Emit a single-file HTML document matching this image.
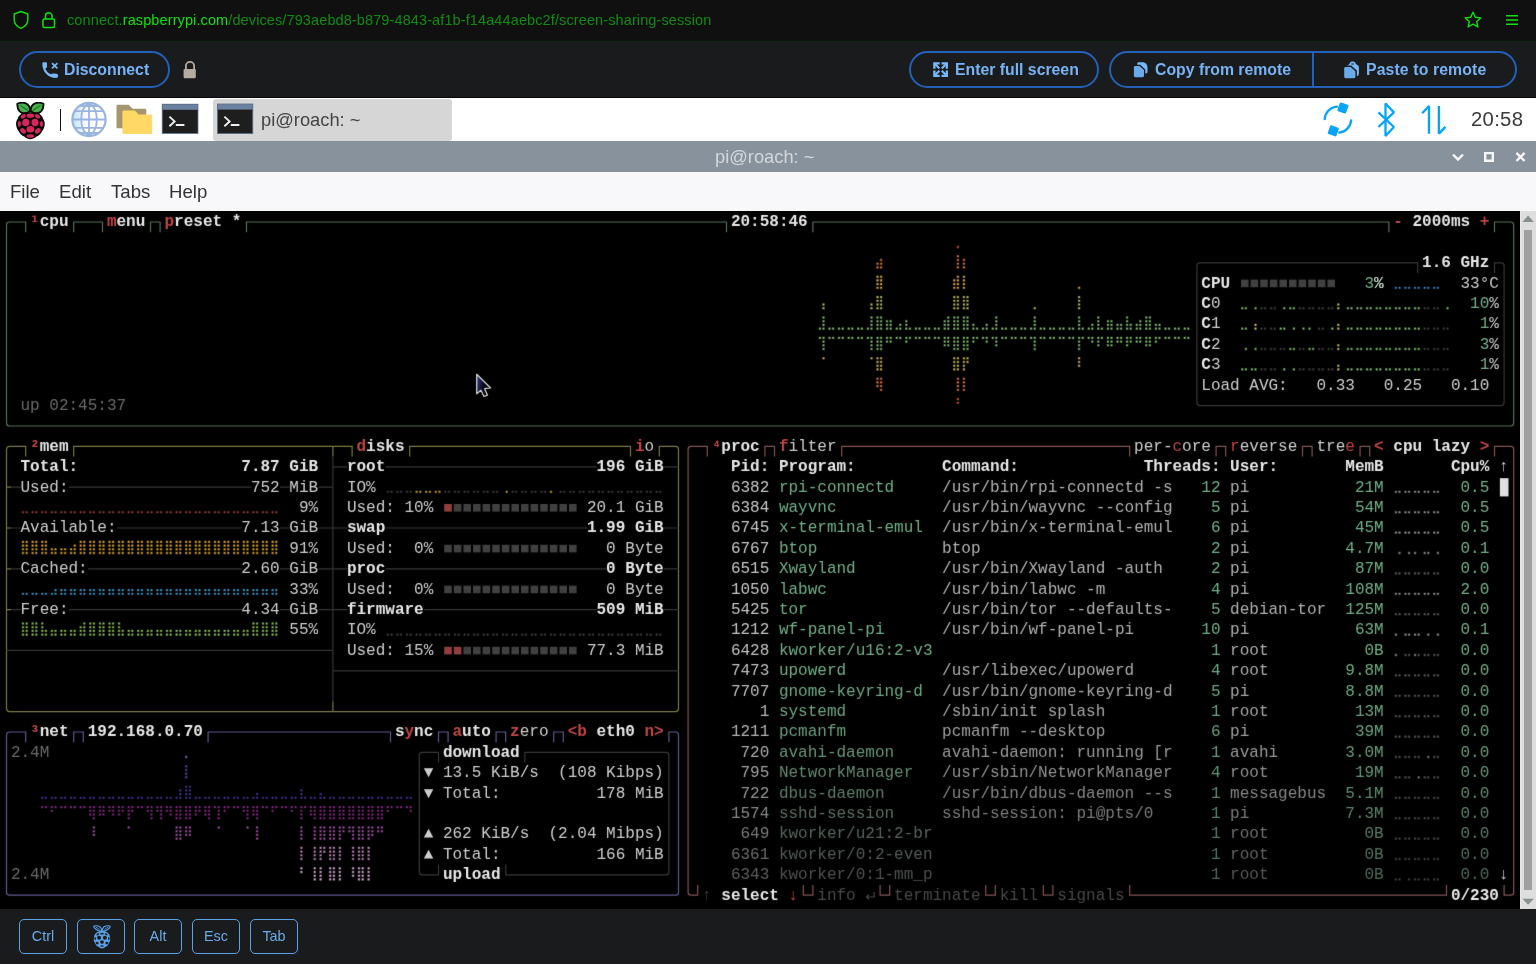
<!DOCTYPE html>
<html><head><meta charset="utf-8"><title>Raspberry Pi Connect</title>
<style>
*{box-sizing:border-box;margin:0;padding:0}
html,body{width:1536px;height:964px;overflow:hidden;background:#1a1b1d;font-family:"Liberation Sans",sans-serif}
#url{filter:blur(0.3px);position:absolute;left:0;top:0;width:1536px;height:41px;background:#101010;border-bottom:1px solid #061a06}
#url .txt{position:absolute;left:67px;top:10px;font-size:58px;letter-spacing:0.44px;line-height:80px;color:#138a13;white-space:pre;transform:scale(.25);transform-origin:0 0}
#url .txt b{font-weight:normal;color:#10e010}
#url svg{position:absolute}
#tb{filter:blur(0.3px);position:absolute;left:0;top:41px;width:1536px;height:57px;background:#1a1b1d;border-bottom:1px solid #050505}
.pill{position:absolute;top:10px;height:37px;border:2px solid #2360b8;border-radius:19px;color:#78b4f5;font-weight:bold;font-size:15.8px;line-height:33px;white-space:pre}
.pill span{position:absolute;top:0;font-size:63.2px;line-height:132px;transform:scale(.25);transform-origin:0 0}
.pill svg{position:absolute}
#remote{position:absolute;left:0;top:98px;width:1536px;height:811px;background:#000;overflow:hidden}
#task{filter:blur(0.3px);position:absolute;left:0;top:0;width:1536px;height:43px;background:#fff}
#title{filter:blur(0.3px);position:absolute;left:0;top:43px;width:1536px;height:31px;background:#88929c;color:#d2d7dc;font-size:18.3px;line-height:32px;text-align:center}
#title span{position:absolute;left:715px;top:0;white-space:pre;font-size:73.2px;line-height:128px;transform:scale(.25);transform-origin:0 0}
#menu{filter:blur(0.3px);position:absolute;left:0;top:74px;width:1536px;height:38.5px;background:#f8f8fa;color:#333;font-size:18.6px;line-height:39.4px;z-index:3}
#menu span{position:absolute;top:0;font-size:74.4px;line-height:157.6px;white-space:pre;transform:scale(.25);transform-origin:0 0}
#term{position:absolute;left:0;top:112px;width:1520px;height:699px;background:#000;overflow:hidden;filter:url(#soft);font-family:"Liberation Mono",monospace;font-size:16px;line-height:20.4px}
#term .tx{position:absolute;left:0;top:0;width:7600px;height:3500px;transform:scale(0.2);transform-origin:0 0;font-size:80px;line-height:102px}
#term i{position:absolute;font-style:normal;white-space:pre;height:102px}
#term .ov{position:absolute;left:0;top:0}
#sb{position:absolute;left:1520px;top:112.5px;width:16px;height:698.5px;background:#dedede;border-left:1px solid #e8e8e8}
#sb .th{position:absolute;left:3px;top:19.7px;width:8.4px;height:659.4px;background:#a0a0a0}
#sb svg{position:absolute;left:-1px;top:0}
#bot{filter:blur(0.3px);position:absolute;left:0;top:909px;width:1536px;height:55px;background:#1a1b1d}
.key{position:absolute;top:10px;width:48px;height:35px;border:1.3px solid #5ba2e8;border-radius:5px;color:#6aaae8;font-size:14.4px;line-height:33.5px;text-align:center}
.key svg{position:absolute;left:13.6px;top:4.6px}
.key b{position:absolute;left:-72.65px;top:0;width:192px;font-weight:normal;font-size:57.6px;line-height:126px;text-align:center;transform:scale(.25);transform-origin:50% 0}
#task svg{position:absolute}
#title svg{position:absolute}
.k0{color:#c04444;font-weight:bold;}.k1{color:#e6e6e6;font-weight:bold;}.k2{color:#696969;}.k3{color:#6fae87;}.k4{color:#cccccc;}.k5{color:#c04444;}.k6{color:#3e3e3e;}.k7{color:#474747;}.k8{color:#c6c6c6;}.k9{color:#b0b0b0;}.k10{color:#c5c5c5;}.k11{color:#afafaf;}.k12{color:#6fad86;}.k13{color:#c3c3c3;}.k14{color:#aeaeae;}.k15{color:#6eac86;}.k16{color:#c1c1c1;}.k17{color:#acacac;}.k18{color:#6dab85;}.k19{color:#bebebe;}.k20{color:#aaaaaa;}.k21{color:#6da984;}.k22{color:#bbbbbb;}.k23{color:#a6a6a6;}.k24{color:#6ba682;}.k25{color:#b7b7b7;}.k26{color:#6ca581;}.k27{color:#a3a3a3;}.k28{color:#6aa480;}.k29{color:#b2b2b2;}.k30{color:#6a9f7e;}.k31{color:#9f9f9f;}.k32{color:#68a07e;}.k33{color:#669477;}.k34{color:#989898;}.k35{color:#669b7a;}.k36{color:#a0a0a0;}.k37{color:#628871;}.k38{color:#909090;}.k39{color:#639476;}.k40{color:#949494;}.k41{color:#5d7b69;}.k42{color:#858585;}.k43{color:#5f8c70;}.k44{color:#878787;}.k45{color:#596e61;}.k46{color:#7a7a7a;}.k47{color:#5a836a;}.k48{color:#797979;}.k49{color:#55635a;}.k50{color:#6e6e6e;}.k51{color:#567a64;}.k52{color:#6b6b6b;}.k53{color:#515955;}.k54{color:#626262;}.k55{color:#51705e;}.k56{color:#5d5d5d;}.k57{color:#4e504f;}.k58{color:#565656;}.k59{color:#4d6758;}
</style></head><body>
<svg width="0" height="0" style="position:absolute"><defs><filter id="soft" x="0" y="0" width="100%" height="100%" color-interpolation-filters="sRGB"><feConvolveMatrix order="3" kernelMatrix="0.01 0.06 0.01 0.06 0.72 0.06 0.01 0.06 0.01" edgeMode="duplicate" preserveAlpha="true"/></filter></defs></svg>
<div id="url">
<svg style="left:12px;top:10px" width="18" height="20" viewBox="0 0 18 20"><path d="M9 1.5 L15.8 4 V9.5 C15.8 13.5 13 16.8 9 18.4 C5 16.8 2.2 13.5 2.2 9.5 V4 Z" fill="none" stroke="#10e010" stroke-width="1.4" stroke-linejoin="round"/></svg>
<svg style="left:40px;top:10px" width="18" height="20" viewBox="0 0 18 20"><rect x="3" y="9" width="11.5" height="8.5" rx="1.5" fill="none" stroke="#10e010" stroke-width="1.5"/><path d="M5.5 9 V6 a3.2 3.2 0 0 1 6.5 0 V9" fill="none" stroke="#10e010" stroke-width="1.5"/></svg>
<div class="txt">connect.<b>raspberrypi.com</b>/devices/793aebd8-b879-4843-af1b-f14a44aebc2f/screen-sharing-session</div>
<svg style="left:1463px;top:10px" width="20" height="20" viewBox="0 0 20 20"><path d="M10 2.2 L12.3 7.3 L17.8 7.9 L13.7 11.6 L14.9 17 L10 14.2 L5.1 17 L6.3 11.6 L2.2 7.9 L7.7 7.3 Z" fill="none" stroke="#10e010" stroke-width="1.4" stroke-linejoin="round"/></svg>
<svg style="left:1504px;top:12px" width="16" height="16" viewBox="0 0 16 16"><path d="M2 3.8h12M2 8h12M2 12.2h12" stroke="#10e010" stroke-width="1.4"/></svg>
</div>
<div id="tb">
<div class="pill" style="left:19px;width:151px"><svg style="left:21px;top:9px" width="16" height="16" viewBox="0 0 15 15"><path d="M0.3 1.6 C0.3 0.7 0.9 0.2 1.7 0.2 L3.4 0.2 C4.2 0.2 4.7 0.7 4.7 1.5 L4.7 4.4 C4.7 5.1 4.3 5.6 3.6 5.7 L3.2 5.8 C3.7 8.3 6 10.9 8.7 11.6 C9 10.9 9.6 10.6 10.4 10.7 L13.6 10.9 C14.5 11 15 11.6 15 12.4 L15 13.4 C15 14.4 14.3 15 13.4 15 C6 15 0.3 9.3 0.3 1.6 Z" fill="#78b8f8"/><path d="M9.4 1 L14.4 6 M14.4 1 L9.4 6" stroke="#78b8f8" stroke-width="1.6" fill="none"/></svg><span style="left:43.4px">Disconnect</span></div>
<div style="position:absolute;left:183px;top:20px;width:14px;height:18px"><svg width="14" height="18" viewBox="0 0 14 18" style="position:absolute;left:0;top:0"><path d="M2.9 9 V5 a4.1 4.1 0 0 1 8.2 0 V9" fill="none" stroke="#b4aca0" stroke-width="1.8"/><rect x="0.6" y="8.1" width="12.2" height="9.1" rx="1.2" fill="#b4aca0"/></svg></div>
<div class="pill" style="left:909px;width:190px"><svg style="left:22px;top:9.2px" width="15.2" height="15.2" viewBox="0 0 15 15"><path d="M0.2 0.2H6.6V2.5H2.5V6.6H0.2Z M14.8 0.2V6.6H12.5V2.5H8.4V0.2Z M0.2 14.8V8.4H2.5V12.5H6.6V14.8Z M14.8 14.8H8.4V12.5H12.5V8.4H14.8Z" fill="#78b8f8"/><path d="M1.6 1.6L6.3 6.3M13.4 1.6L8.7 6.3M1.6 13.4L6.3 8.7M13.4 13.4L8.7 8.7" stroke="#78b8f8" stroke-width="2.1" fill="none"/></svg><span style="left:43.6px">Enter full screen</span></div>
<div class="pill" style="left:1109px;width:408px"><svg style="left:22px;top:9px" width="16" height="17" viewBox="0 0 16 17"><path d="M5.6 0.2 H9.4 C12.4 0.2 14.5 2.4 14.5 5.4 V9.8 C14.5 10.8 13.8 11.4 12.8 11.4 H12.3 V7.4 L7.3 2.8 H4.3 V1.5 C4.3 0.7 4.8 0.2 5.6 0.2Z" fill="#78b8f8"/><path d="M2.3 4 H6.6 L11 8 V13.8 C11 14.6 10.4 15.2 9.6 15.2 H2.3 C1.5 15.2 0.9 14.6 0.9 13.8 V5.4 C0.9 4.6 1.5 4 2.3 4Z" fill="#6aaae8"/></svg><span style="left:44px">Copy from remote</span><svg style="left:232px;top:7px" width="17" height="19" viewBox="0 0 17 19"><path d="M4.4 5 C5.6 5 6.2 4.2 6.6 3.4 C7.2 2.2 8 1.6 9.6 1.6 C11.2 1.6 12 2.2 12.6 3.4 C13.2 4.4 14 4.6 14.8 5.2 C15.6 5.8 15.9 6.4 15.9 7.4 V13.2 C15.9 14.8 15.2 15.8 13.9 16.2 V10.4 L8.2 5.6 H4.4Z M8.3 3.6 H11 V4.6 H8.3Z" fill="#78b8f8" fill-rule="evenodd"/><path d="M2.6 7 H7.6 L12.4 11.2 V16.8 C12.4 17.6 11.8 18.2 11 18.2 H2.6 C1.8 18.2 1.2 17.6 1.2 16.8 V8.4 C1.2 7.6 1.8 7 2.6 7Z" fill="#6aaae8"/></svg><span style="left:255px;letter-spacing:0.48px">Paste to remote</span><div style="position:absolute;left:201px;top:0;width:2px;height:33px;background:#2360b8"></div></div>
</div>
<div id="remote">
<div id="task">
<svg style="left:13.7px;top:3.6px" width="33.4" height="38.6" viewBox="0 0 34 40" preserveAspectRatio="none">
<path d="M16.3 9.6 C16.6 6 15 2.6 11.4 1.2 C9 0.3 5.6 0.8 3.4 1.8 C3.2 4.6 3.8 7.4 5.6 9.4 C8 12 12 12.4 16.3 9.6Z M17.1 9.6 C16.8 6 18.4 2.6 22 1.2 C24.4 0.3 27.8 0.8 30 1.8 C30.2 4.6 29.6 7.4 27.8 9.4 C25.4 12 21.4 12.4 17.1 9.6Z" fill="#46af4b" stroke="#0a0a0a" stroke-width="1.9" stroke-linejoin="round"/>
<path d="M6.4 3.6 L14.6 9 M27 3.6 L18.8 9" stroke="#1c5a20" stroke-width="1" fill="none"/>
<path d="M16.7 10.6 C19 10.4 22.4 10.8 25 12 C27.6 13.2 29 15 29.6 17.4 C31 19.4 31.6 21.8 31.2 24 C30.8 26.4 30 28.4 28.6 30.2 C27.4 32.8 25.4 34.6 23 35.8 C21 37.6 18.6 38.6 16.7 38.6 C14.8 38.6 12.4 37.6 10.4 35.8 C8 34.6 6 32.8 4.8 30.2 C3.4 28.4 2.6 26.4 2.2 24 C1.8 21.8 2.4 19.4 3.8 17.4 C4.4 15 5.8 13.2 8.4 12 C11 10.8 14.4 10.4 16.7 10.6Z" fill="#0a0a0a"/>
<g fill="#d6265c"><ellipse cx="16.7" cy="14.2" rx="3.9" ry="2.2"/><ellipse cx="9.4" cy="14.9" rx="2.9" ry="1.9" transform="rotate(-32 9.4 14.9)"/><ellipse cx="24" cy="14.9" rx="2.9" ry="1.9" transform="rotate(32 24 14.9)"/><ellipse cx="12" cy="21.2" rx="3.6" ry="3.9"/><ellipse cx="21.4" cy="21.2" rx="3.6" ry="3.9"/><ellipse cx="5.4" cy="22.8" rx="1.6" ry="3"/><ellipse cx="28" cy="22.8" rx="1.6" ry="3"/><ellipse cx="16.7" cy="28.2" rx="3.9" ry="3.3"/><ellipse cx="9.2" cy="30" rx="3.3" ry="2.3" transform="rotate(42 9.2 30)"/><ellipse cx="24.2" cy="30" rx="3.3" ry="2.3" transform="rotate(-42 24.2 30)"/><ellipse cx="16.7" cy="35.2" rx="3.8" ry="1.9"/></g>
</svg>
<div style="position:absolute;left:60px;top:11px;width:1.4px;height:22px;background:#111"></div>
<svg style="left:70px;top:2px" width="38" height="40" viewBox="0 0 38 40">
<defs><linearGradient id="gg" x1="0" y1="0" x2="1" y2="0"><stop offset="0" stop-color="#c4e2f8"/><stop offset="0.45" stop-color="#ffffff"/><stop offset="1" stop-color="#ffffff"/></linearGradient></defs>
<circle cx="19" cy="19.5" r="16.6" fill="url(#gg)" stroke="#9ab4e0" stroke-width="2.2"/>
<path d="M19 3 V36 M2.6 19.5 H35.4 M4.8 11.2 H33.2 M4.8 27.8 H33.2 M9 6 H29 M9 33 H29 M19 3 C8.6 9 8.6 30 19 36 M19 3 C29.4 9 29.4 30 19 36" fill="none" stroke="#9ab4e0" stroke-width="1.8"/>
</svg>
<svg style="left:114px;top:4px" width="42" height="36" viewBox="0 0 42 36">
<path d="M2.5 4.4 C2.5 3.4 3.1 2.8 4.1 2.8 H14.6 L18.6 6.7 H30.7 C31.7 6.7 32.3 7.3 32.3 8.3 V26.2 H2.5Z" fill="#a5966e"/>
<path d="M8.4 10.2 C8.4 9.2 9 8.6 10 8.6 H20.8 L24.6 12.5 H36.6 C37.6 12.5 38.2 13.1 38.2 14.1 V30.5 C38.2 31.5 37.6 32.1 36.6 32.1 H10 C9 32.1 8.4 31.5 8.4 30.5Z" fill="#ffd866"/>
</svg>
<svg style="left:160px;top:4px" width="40" height="34" viewBox="0 0 40 34">
<rect x="2.2" y="2.2" width="35.8" height="29.2" fill="#1e1e1e"/><rect x="2.2" y="2.2" width="35.8" height="5.6" fill="#6a82a0"/><rect x="2.2" y="2.2" width="35.8" height="29.2" fill="none" stroke="#5a7090" stroke-width="0.8"/>
<path d="M9.4 14.6 L14.6 19.4 L9.4 24.2 M15.8 23 H24.4" fill="none" stroke="#f0f0f0" stroke-width="1.9"/>
</svg>
<div style="position:absolute;left:212.5px;top:1px;width:239.5px;height:42px;background:#d6d6d6;border-radius:3px"></div>
<svg style="left:215px;top:4px" width="40" height="34" viewBox="0 0 40 34">
<rect x="2.4" y="2" width="35.4" height="29.6" fill="#1e1e1e"/><rect x="2.4" y="2" width="35.4" height="5.6" fill="#6a82a0"/><rect x="2.4" y="2" width="35.4" height="29.6" fill="none" stroke="#5a7090" stroke-width="0.8"/>
<path d="M9.4 14.6 L14.6 19.4 L9.4 24.2 M15.8 23 H24.4" fill="none" stroke="#f0f0f0" stroke-width="1.9"/>
</svg>
<div style="position:absolute;left:260.5px;top:9.5px;font-size:73.2px;line-height:96px;color:#444;white-space:pre;transform:scale(.25);transform-origin:0 0">pi@roach: ~</div>
<svg style="left:1320px;top:2px" width="36" height="40" viewBox="0 0 36 40">
<path d="M17 6.7 A13.2 13.2 0 0 0 4.7 19" fill="none" stroke="#08a4f8" stroke-width="2.3" stroke-linecap="round"/>
<path d="M31.1 20.3 A13.2 13.2 0 0 1 19.2 32.6" fill="none" stroke="#08a4f8" stroke-width="2.3" stroke-linecap="round"/>
<rect x="-4.6" y="-4.6" width="9.2" height="9.2" rx="1.2" fill="#08a4f8" transform="translate(22.9 8) rotate(20)"/>
<rect x="-4.6" y="-4.6" width="9.2" height="9.2" rx="1.2" fill="#08a4f8" transform="translate(13.3 30.8) rotate(20)"/>
</svg>
<svg style="left:1372px;top:2px" width="28" height="40" viewBox="0 0 28 40">
<path d="M6.4 12.4 L21.9 27 L13.5 36 V3.5 L21.9 12.4 L6.4 27" fill="none" stroke="#08a4f8" stroke-width="2.3" stroke-linejoin="bevel"/>
</svg>
<svg style="left:1416px;top:2px" width="34" height="40" viewBox="0 0 34 40">
<path d="M6.2 13.2 L13 6 V33.7 M22.9 5.9 V33.6 L29.4 26.9" fill="none" stroke="#08a4f8" stroke-width="2.4" stroke-linejoin="bevel"/>
</svg>
<div style="position:absolute;left:1470.5px;top:8px;font-size:81.2px;letter-spacing:1.2px;line-height:104px;color:#3a3a3a;white-space:pre;transform:scale(.25);transform-origin:0 0">20:58</div>
</div>
<div id="title"><span>pi@roach: ~</span>
<svg style="left:1448px;top:6.8px" width="84" height="20" viewBox="0 0 84 20"><path d="M5 6.5 L10 11.6 L15 6.5 M37.2 5.1 H44.8 V12.7 H37.2Z M68.4 4.8 L76.6 13 M76.6 4.8 L68.4 13" fill="none" stroke="#f6f6f6" stroke-width="2.4"/></svg>
</div>
<div id="menu"><span style="left:10px">File</span><span style="left:59px">Edit</span><span style="left:110.5px">Tabs</span><span style="left:169.2px">Help</span></div>
<div id="term">
<svg class="ov" width="1520" height="700" viewBox="0 0 1520 700">
<path d="M11.30 12.00L9.50 12.00Q6.50 12.00 6.50 15.00L6.50 22.20M11.30 12.00L20.90 12.00M20.90 12.00L25.70 12.00L25.70 22.20M78.50 12.00L73.70 12.00L73.70 22.20M78.50 12.00L97.70 12.00M97.70 12.00L102.50 12.00L102.50 22.20M155.30 12.00L150.50 12.00L150.50 22.20M155.30 12.00L160.10 12.00L160.10 22.20M251.30 12.00L246.50 12.00L246.50 22.20M251.30 12.00L721.70 12.00M721.70 12.00L726.50 12.00L726.50 22.20M817.70 12.00L812.90 12.00L812.90 22.20M817.70 12.00L1384.10 12.00M1384.10 12.00L1388.90 12.00L1388.90 22.20M1499.30 12.00L1494.50 12.00L1494.50 22.20M1499.30 12.00L1508.90 12.00M1508.90 12.00L1510.70 12.00Q1513.70 12.00 1513.70 15.00L1513.70 22.20M6.50 22.20L6.50 205.80M1513.70 22.20L1513.70 205.80M11.30 216.00L9.50 216.00Q6.50 216.00 6.50 213.00L6.50 205.80M11.30 216.00L1508.90 216.00M1508.90 216.00L1510.70 216.00Q1513.70 216.00 1513.70 213.00L1513.70 205.80" stroke="#556d59" fill="none" stroke-width="1.2"/>
<path d="M1201.70 52.80L1199.90 52.80Q1196.90 52.80 1196.90 55.80L1196.90 63.00M1201.70 52.80L1412.90 52.80M1412.90 52.80L1417.70 52.80L1417.70 63.00M1499.30 52.80L1494.50 52.80L1494.50 63.00M1499.30 52.80L1501.10 52.80Q1504.10 52.80 1504.10 55.80L1504.10 63.00M1196.90 63.00L1196.90 185.40M1504.10 63.00L1504.10 185.40M1201.70 195.60L1199.90 195.60Q1196.90 195.60 1196.90 192.60L1196.90 185.40M1201.70 195.60L1499.30 195.60M1499.30 195.60L1501.10 195.60Q1504.10 195.60 1504.10 192.60L1504.10 185.40M424.10 542.40L422.30 542.40Q419.30 542.40 419.30 545.40L419.30 552.60M424.10 542.40L433.70 542.40M433.70 542.40L438.50 542.40L438.50 552.60M529.70 542.40L524.90 542.40L524.90 552.60M529.70 542.40L664.10 542.40M664.10 542.40L665.90 542.40Q668.90 542.40 668.90 545.40L668.90 552.60M419.30 552.60L419.30 654.60M668.90 552.60L668.90 654.60M424.10 664.80L422.30 664.80Q419.30 664.80 419.30 661.80L419.30 654.60M424.10 664.80L433.70 664.80M433.70 664.80L438.50 664.80L438.50 654.60M510.50 664.80L505.70 664.80L505.70 654.60M510.50 664.80L664.10 664.80M664.10 664.80L665.90 664.80Q668.90 664.80 668.90 661.80L668.90 654.60" stroke="#363636" fill="none" stroke-width="1.2"/>
<path d="M11.30 236.40L9.50 236.40Q6.50 236.40 6.50 239.40L6.50 246.60M11.30 236.40L20.90 236.40M20.90 236.40L25.70 236.40L25.70 246.60M78.50 236.40L73.70 236.40L73.70 246.60M78.50 236.40L328.10 236.40M328.10 236.40L337.70 236.40M332.90 236.40L332.90 246.60M337.70 236.40L347.30 236.40M347.30 236.40L352.10 236.40L352.10 246.60M414.50 236.40L409.70 236.40L409.70 246.60M414.50 236.40L625.70 236.40M625.70 236.40L630.50 236.40L630.50 246.60M664.10 236.40L659.30 236.40L659.30 246.60M664.10 236.40L673.70 236.40M673.70 236.40L675.50 236.40Q678.50 236.40 678.50 239.40L678.50 246.60M6.50 246.60L6.50 491.40M678.50 246.60L678.50 491.40M11.30 501.60L9.50 501.60Q6.50 501.60 6.50 498.60L6.50 491.40M11.30 501.60L328.10 501.60M328.10 501.60L337.70 501.60M332.90 501.60L332.90 491.40M337.70 501.60L673.70 501.60M673.70 501.60L675.50 501.60Q678.50 501.60 678.50 498.60L678.50 491.40M6.50 277.20L11.30 277.20M6.50 318.00L11.30 318.00M6.50 358.80L11.30 358.80M6.50 399.60L11.30 399.60" stroke="#77773f" fill="none" stroke-width="1.2"/>
<path d="M332.90 246.60L332.90 491.40M11.30 277.20L20.90 277.20M68.90 277.20L251.30 277.20M280.10 277.20L289.70 277.20M318.50 277.20L328.10 277.20M328.10 277.20L332.90 277.20M11.30 318.00L20.90 318.00M116.90 318.00L241.70 318.00M280.10 318.00L289.70 318.00M318.50 318.00L328.10 318.00M328.10 318.00L332.90 318.00M11.30 358.80L20.90 358.80M88.10 358.80L241.70 358.80M280.10 358.80L289.70 358.80M318.50 358.80L328.10 358.80M328.10 358.80L332.90 358.80M11.30 399.60L20.90 399.60M68.90 399.60L241.70 399.60M280.10 399.60L289.70 399.60M318.50 399.60L328.10 399.60M328.10 399.60L332.90 399.60M6.50 440.40L332.90 440.40M332.90 460.80L678.50 460.80M332.90 256.80L347.30 256.80M385.70 256.80L596.90 256.80M664.10 256.80L678.50 256.80M332.90 318.00L347.30 318.00M385.70 318.00L587.30 318.00M664.10 318.00L678.50 318.00M332.90 358.80L347.30 358.80M385.70 358.80L606.50 358.80M664.10 358.80L678.50 358.80M332.90 399.60L347.30 399.60M424.10 399.60L596.90 399.60M664.10 399.60L678.50 399.60" stroke="#343434" fill="none" stroke-width="1.2"/>
<path d="M11.30 522.00L9.50 522.00Q6.50 522.00 6.50 525.00L6.50 532.20M11.30 522.00L20.90 522.00M20.90 522.00L25.70 522.00L25.70 532.20M78.50 522.00L73.70 522.00L73.70 532.20M78.50 522.00L83.30 522.00L83.30 532.20M212.90 522.00L208.10 522.00L208.10 532.20M212.90 522.00L385.70 522.00M385.70 522.00L390.50 522.00L390.50 532.20M443.30 522.00L438.50 522.00L438.50 532.20M443.30 522.00L448.10 522.00L448.10 532.20M500.90 522.00L496.10 522.00L496.10 532.20M500.90 522.00L505.70 522.00L505.70 532.20M558.50 522.00L553.70 522.00L553.70 532.20M558.50 522.00L563.30 522.00L563.30 532.20M673.70 522.00L668.90 522.00L668.90 532.20M673.70 522.00L675.50 522.00Q678.50 522.00 678.50 525.00L678.50 532.20M6.50 532.20L6.50 675.00M678.50 532.20L678.50 675.00M11.30 685.20L9.50 685.20Q6.50 685.20 6.50 682.20L6.50 675.00M11.30 685.20L673.70 685.20M673.70 685.20L675.50 685.20Q678.50 685.20 678.50 682.20L678.50 675.00" stroke="#5c588d" fill="none" stroke-width="1.2"/>
<path d="M692.90 236.40L691.10 236.40Q688.10 236.40 688.10 239.40L688.10 246.60M692.90 236.40L702.50 236.40M702.50 236.40L707.30 236.40L707.30 246.60M769.70 236.40L764.90 236.40L764.90 246.60M769.70 236.40L774.50 236.40L774.50 246.60M846.50 236.40L841.70 236.40L841.70 246.60M846.50 236.40L1124.90 236.40M1124.90 236.40L1129.70 236.40L1129.70 246.60M1220.90 236.40L1216.10 236.40L1216.10 246.60M1220.90 236.40L1225.70 236.40L1225.70 246.60M1307.30 236.40L1302.50 236.40L1302.50 246.60M1307.30 236.40L1312.10 236.40L1312.10 246.60M1364.90 236.40L1360.10 236.40L1360.10 246.60M1364.90 236.40L1369.70 236.40L1369.70 246.60M1499.30 236.40L1494.50 236.40L1494.50 246.60M1499.30 236.40L1508.90 236.40M1508.90 236.40L1510.70 236.40Q1513.70 236.40 1513.70 239.40L1513.70 246.60M688.10 246.60L688.10 675.00M1513.70 246.60L1513.70 675.00M692.90 685.20L691.10 685.20Q688.10 685.20 688.10 682.20L688.10 675.00M692.90 685.20L697.70 685.20L697.70 675.00M808.10 685.20L803.30 685.20L803.30 675.00M808.10 685.20L812.90 685.20L812.90 675.00M884.90 685.20L880.10 685.20L880.10 675.00M884.90 685.20L889.70 685.20L889.70 675.00M990.50 685.20L985.70 685.20L985.70 675.00M990.50 685.20L995.30 685.20L995.30 675.00M1048.10 685.20L1043.30 685.20L1043.30 675.00M1048.10 685.20L1052.90 685.20L1052.90 675.00M1134.50 685.20L1129.70 685.20L1129.70 675.00M1134.50 685.20L1441.70 685.20M1441.70 685.20L1446.50 685.20L1446.50 675.00M1508.90 685.20L1504.10 685.20L1504.10 675.00M1508.90 685.20L1510.70 685.20Q1513.70 685.20 1513.70 682.20L1513.70 675.00" stroke="#805252" fill="none" stroke-width="1.2"/>
<path d="M874.20 682.10L874.20 687.00L866.50 687.00M868.90 684.60L866.50 687.00L868.90 689.40" stroke="#474747" fill="none" stroke-width="1.2"/>
<g stroke-opacity="0.34" stroke-width="1.25" stroke-linejoin="round">
<path d="M1395.1 77.0h1.6v1.6h-1.6zM1398.7 77.0h1.6v1.6h-1.6zM1404.7 77.0h1.6v1.6h-1.6zM1408.3 77.0h1.6v1.6h-1.6zM1414.3 77.0h1.6v1.6h-1.6zM1417.9 77.0h1.6v1.6h-1.6zM1423.9 77.0h1.6v1.6h-1.6zM1427.5 77.0h1.6v1.6h-1.6zM1433.5 77.0h1.6v1.6h-1.6zM1437.1 77.0h1.6v1.6h-1.6z" fill="#3f7fc0" stroke="#3f7fc0"/>
<path d="M1241.5 97.4h1.6v1.6h-1.6zM1245.1 97.4h1.6v1.6h-1.6zM1254.7 97.4h1.6v1.6h-1.6zM1283.5 97.4h1.6v1.6h-1.6zM1289.5 97.4h1.6v1.6h-1.6zM1293.1 97.4h1.6v1.6h-1.6zM1347.1 97.4h1.6v1.6h-1.6zM1350.7 97.4h1.6v1.6h-1.6zM1356.7 97.4h1.6v1.6h-1.6zM1360.3 97.4h1.6v1.6h-1.6zM1366.3 97.4h1.6v1.6h-1.6zM1369.9 97.4h1.6v1.6h-1.6zM1375.9 97.4h1.6v1.6h-1.6zM1379.5 97.4h1.6v1.6h-1.6zM1385.5 97.4h1.6v1.6h-1.6zM1389.1 97.4h1.6v1.6h-1.6zM1395.1 97.4h1.6v1.6h-1.6zM1398.7 97.4h1.6v1.6h-1.6zM1404.7 97.4h1.6v1.6h-1.6zM1408.3 97.4h1.6v1.6h-1.6zM1414.3 97.4h1.6v1.6h-1.6zM1417.9 97.4h1.6v1.6h-1.6zM1446.7 97.4h1.6v1.6h-1.6zM1241.5 117.8h1.6v1.6h-1.6zM1245.1 117.8h1.6v1.6h-1.6zM1279.9 117.8h1.6v1.6h-1.6zM1283.5 117.8h1.6v1.6h-1.6zM1293.1 117.8h1.6v1.6h-1.6zM1302.7 117.8h1.6v1.6h-1.6zM1308.7 117.8h1.6v1.6h-1.6zM1331.5 117.8h1.6v1.6h-1.6zM1347.1 117.8h1.6v1.6h-1.6zM1350.7 117.8h1.6v1.6h-1.6zM1356.7 117.8h1.6v1.6h-1.6zM1360.3 117.8h1.6v1.6h-1.6zM1366.3 117.8h1.6v1.6h-1.6zM1369.9 117.8h1.6v1.6h-1.6zM1375.9 117.8h1.6v1.6h-1.6zM1379.5 117.8h1.6v1.6h-1.6zM1385.5 117.8h1.6v1.6h-1.6zM1389.1 117.8h1.6v1.6h-1.6zM1395.1 117.8h1.6v1.6h-1.6zM1398.7 117.8h1.6v1.6h-1.6zM1404.7 117.8h1.6v1.6h-1.6zM1408.3 117.8h1.6v1.6h-1.6zM1414.3 117.8h1.6v1.6h-1.6zM1417.9 117.8h1.6v1.6h-1.6zM1245.1 138.2h1.6v1.6h-1.6zM1254.7 138.2h1.6v1.6h-1.6zM1289.5 138.2h1.6v1.6h-1.6zM1293.1 138.2h1.6v1.6h-1.6zM1308.7 138.2h1.6v1.6h-1.6zM1312.3 138.2h1.6v1.6h-1.6zM1347.1 138.2h1.6v1.6h-1.6zM1350.7 138.2h1.6v1.6h-1.6zM1356.7 138.2h1.6v1.6h-1.6zM1360.3 138.2h1.6v1.6h-1.6zM1366.3 138.2h1.6v1.6h-1.6zM1369.9 138.2h1.6v1.6h-1.6zM1375.9 138.2h1.6v1.6h-1.6zM1379.5 138.2h1.6v1.6h-1.6zM1385.5 138.2h1.6v1.6h-1.6zM1389.1 138.2h1.6v1.6h-1.6zM1395.1 138.2h1.6v1.6h-1.6zM1398.7 138.2h1.6v1.6h-1.6zM1404.7 138.2h1.6v1.6h-1.6zM1408.3 138.2h1.6v1.6h-1.6zM1414.3 138.2h1.6v1.6h-1.6zM1417.9 138.2h1.6v1.6h-1.6zM1241.5 158.6h1.6v1.6h-1.6zM1245.1 158.6h1.6v1.6h-1.6zM1251.1 158.6h1.6v1.6h-1.6zM1254.7 158.6h1.6v1.6h-1.6zM1283.5 158.6h1.6v1.6h-1.6zM1293.1 158.6h1.6v1.6h-1.6zM1347.1 158.6h1.6v1.6h-1.6zM1350.7 158.6h1.6v1.6h-1.6zM1356.7 158.6h1.6v1.6h-1.6zM1360.3 158.6h1.6v1.6h-1.6zM1366.3 158.6h1.6v1.6h-1.6zM1369.9 158.6h1.6v1.6h-1.6zM1375.9 158.6h1.6v1.6h-1.6zM1379.5 158.6h1.6v1.6h-1.6zM1385.5 158.6h1.6v1.6h-1.6zM1389.1 158.6h1.6v1.6h-1.6zM1395.1 158.6h1.6v1.6h-1.6zM1398.7 158.6h1.6v1.6h-1.6zM1404.7 158.6h1.6v1.6h-1.6zM1408.3 158.6h1.6v1.6h-1.6zM1414.3 158.6h1.6v1.6h-1.6zM1417.9 158.6h1.6v1.6h-1.6z" fill="#78b86a" stroke="#78b86a"/>
<path d="M1260.7 97.4h1.6v1.6h-1.6zM1264.3 97.4h1.6v1.6h-1.6zM1270.3 97.4h1.6v1.6h-1.6zM1273.9 97.4h1.6v1.6h-1.6zM1299.1 97.4h1.6v1.6h-1.6zM1302.7 97.4h1.6v1.6h-1.6zM1308.7 97.4h1.6v1.6h-1.6zM1312.3 97.4h1.6v1.6h-1.6zM1318.3 97.4h1.6v1.6h-1.6zM1321.9 97.4h1.6v1.6h-1.6zM1327.9 97.4h1.6v1.6h-1.6zM1331.5 97.4h1.6v1.6h-1.6zM1423.9 97.4h1.6v1.6h-1.6zM1427.5 97.4h1.6v1.6h-1.6zM1433.5 97.4h1.6v1.6h-1.6zM1437.1 97.4h1.6v1.6h-1.6zM1260.7 117.8h1.6v1.6h-1.6zM1264.3 117.8h1.6v1.6h-1.6zM1270.3 117.8h1.6v1.6h-1.6zM1273.9 117.8h1.6v1.6h-1.6zM1318.3 117.8h1.6v1.6h-1.6zM1321.9 117.8h1.6v1.6h-1.6zM1423.9 117.8h1.6v1.6h-1.6zM1427.5 117.8h1.6v1.6h-1.6zM1433.5 117.8h1.6v1.6h-1.6zM1437.1 117.8h1.6v1.6h-1.6zM1443.1 117.8h1.6v1.6h-1.6zM1446.7 117.8h1.6v1.6h-1.6zM1260.7 138.2h1.6v1.6h-1.6zM1264.3 138.2h1.6v1.6h-1.6zM1270.3 138.2h1.6v1.6h-1.6zM1273.9 138.2h1.6v1.6h-1.6zM1279.9 138.2h1.6v1.6h-1.6zM1283.5 138.2h1.6v1.6h-1.6zM1299.1 138.2h1.6v1.6h-1.6zM1302.7 138.2h1.6v1.6h-1.6zM1318.3 138.2h1.6v1.6h-1.6zM1321.9 138.2h1.6v1.6h-1.6zM1327.9 138.2h1.6v1.6h-1.6zM1331.5 138.2h1.6v1.6h-1.6zM1423.9 138.2h1.6v1.6h-1.6zM1427.5 138.2h1.6v1.6h-1.6zM1433.5 138.2h1.6v1.6h-1.6zM1437.1 138.2h1.6v1.6h-1.6zM1443.1 138.2h1.6v1.6h-1.6zM1446.7 138.2h1.6v1.6h-1.6zM1260.7 158.6h1.6v1.6h-1.6zM1264.3 158.6h1.6v1.6h-1.6zM1270.3 158.6h1.6v1.6h-1.6zM1273.9 158.6h1.6v1.6h-1.6zM1299.1 158.6h1.6v1.6h-1.6zM1302.7 158.6h1.6v1.6h-1.6zM1308.7 158.6h1.6v1.6h-1.6zM1312.3 158.6h1.6v1.6h-1.6zM1318.3 158.6h1.6v1.6h-1.6zM1321.9 158.6h1.6v1.6h-1.6zM1327.9 158.6h1.6v1.6h-1.6zM1331.5 158.6h1.6v1.6h-1.6zM1423.9 158.6h1.6v1.6h-1.6zM1427.5 158.6h1.6v1.6h-1.6zM1433.5 158.6h1.6v1.6h-1.6zM1437.1 158.6h1.6v1.6h-1.6zM1443.1 158.6h1.6v1.6h-1.6zM1446.7 158.6h1.6v1.6h-1.6zM387.0 281.0h1.6v1.6h-1.6zM390.7 281.0h1.6v1.6h-1.6zM396.6 281.0h1.6v1.6h-1.6zM400.3 281.0h1.6v1.6h-1.6zM406.2 281.0h1.6v1.6h-1.6zM409.9 281.0h1.6v1.6h-1.6zM444.6 281.0h1.6v1.6h-1.6zM448.3 281.0h1.6v1.6h-1.6zM454.2 281.0h1.6v1.6h-1.6zM457.9 281.0h1.6v1.6h-1.6zM463.8 281.0h1.6v1.6h-1.6zM467.5 281.0h1.6v1.6h-1.6zM473.4 281.0h1.6v1.6h-1.6zM477.1 281.0h1.6v1.6h-1.6zM483.0 281.0h1.6v1.6h-1.6zM486.7 281.0h1.6v1.6h-1.6zM492.6 281.0h1.6v1.6h-1.6zM496.3 281.0h1.6v1.6h-1.6zM511.8 281.0h1.6v1.6h-1.6zM515.5 281.0h1.6v1.6h-1.6zM521.5 281.0h1.6v1.6h-1.6zM525.1 281.0h1.6v1.6h-1.6zM531.1 281.0h1.6v1.6h-1.6zM534.7 281.0h1.6v1.6h-1.6zM540.7 281.0h1.6v1.6h-1.6zM544.3 281.0h1.6v1.6h-1.6zM559.9 281.0h1.6v1.6h-1.6zM563.5 281.0h1.6v1.6h-1.6zM569.5 281.0h1.6v1.6h-1.6zM573.1 281.0h1.6v1.6h-1.6zM579.1 281.0h1.6v1.6h-1.6zM582.7 281.0h1.6v1.6h-1.6zM588.7 281.0h1.6v1.6h-1.6zM592.3 281.0h1.6v1.6h-1.6zM598.2 281.0h1.6v1.6h-1.6zM601.9 281.0h1.6v1.6h-1.6zM607.9 281.0h1.6v1.6h-1.6zM611.5 281.0h1.6v1.6h-1.6zM617.5 281.0h1.6v1.6h-1.6zM621.1 281.0h1.6v1.6h-1.6zM627.1 281.0h1.6v1.6h-1.6zM630.7 281.0h1.6v1.6h-1.6zM636.7 281.0h1.6v1.6h-1.6zM640.3 281.0h1.6v1.6h-1.6zM646.2 281.0h1.6v1.6h-1.6zM649.9 281.0h1.6v1.6h-1.6zM655.9 281.0h1.6v1.6h-1.6zM659.5 281.0h1.6v1.6h-1.6zM387.0 423.8h1.6v1.6h-1.6zM390.7 423.8h1.6v1.6h-1.6zM396.6 423.8h1.6v1.6h-1.6zM400.3 423.8h1.6v1.6h-1.6zM406.2 423.8h1.6v1.6h-1.6zM409.9 423.8h1.6v1.6h-1.6zM415.8 423.8h1.6v1.6h-1.6zM419.5 423.8h1.6v1.6h-1.6zM425.4 423.8h1.6v1.6h-1.6zM429.1 423.8h1.6v1.6h-1.6zM435.0 423.8h1.6v1.6h-1.6zM438.7 423.8h1.6v1.6h-1.6zM444.6 423.8h1.6v1.6h-1.6zM448.3 423.8h1.6v1.6h-1.6zM454.2 423.8h1.6v1.6h-1.6zM457.9 423.8h1.6v1.6h-1.6zM463.8 423.8h1.6v1.6h-1.6zM467.5 423.8h1.6v1.6h-1.6zM473.4 423.8h1.6v1.6h-1.6zM477.1 423.8h1.6v1.6h-1.6zM483.0 423.8h1.6v1.6h-1.6zM486.7 423.8h1.6v1.6h-1.6zM492.6 423.8h1.6v1.6h-1.6zM496.3 423.8h1.6v1.6h-1.6zM502.2 423.8h1.6v1.6h-1.6zM505.9 423.8h1.6v1.6h-1.6zM511.8 423.8h1.6v1.6h-1.6zM515.5 423.8h1.6v1.6h-1.6zM521.5 423.8h1.6v1.6h-1.6zM525.1 423.8h1.6v1.6h-1.6zM531.1 423.8h1.6v1.6h-1.6zM534.7 423.8h1.6v1.6h-1.6zM540.7 423.8h1.6v1.6h-1.6zM544.3 423.8h1.6v1.6h-1.6zM550.2 423.8h1.6v1.6h-1.6zM553.9 423.8h1.6v1.6h-1.6zM559.9 423.8h1.6v1.6h-1.6zM563.5 423.8h1.6v1.6h-1.6zM569.5 423.8h1.6v1.6h-1.6zM573.1 423.8h1.6v1.6h-1.6zM579.1 423.8h1.6v1.6h-1.6zM582.7 423.8h1.6v1.6h-1.6zM588.7 423.8h1.6v1.6h-1.6zM592.3 423.8h1.6v1.6h-1.6zM598.2 423.8h1.6v1.6h-1.6zM601.9 423.8h1.6v1.6h-1.6zM607.9 423.8h1.6v1.6h-1.6zM611.5 423.8h1.6v1.6h-1.6zM617.5 423.8h1.6v1.6h-1.6zM621.1 423.8h1.6v1.6h-1.6zM627.1 423.8h1.6v1.6h-1.6zM630.7 423.8h1.6v1.6h-1.6zM636.7 423.8h1.6v1.6h-1.6zM640.3 423.8h1.6v1.6h-1.6zM646.2 423.8h1.6v1.6h-1.6zM649.9 423.8h1.6v1.6h-1.6zM655.9 423.8h1.6v1.6h-1.6zM659.5 423.8h1.6v1.6h-1.6z" fill="#3c3c3c" stroke="#3c3c3c"/>
<path d="M1337.5 97.4h1.6v1.6h-1.6zM1337.5 93.7h1.6v1.6h-1.6zM1254.7 117.8h1.6v1.6h-1.6zM1254.7 114.1h1.6v1.6h-1.6zM1337.5 117.8h1.6v1.6h-1.6zM1337.5 114.1h1.6v1.6h-1.6zM1337.5 138.2h1.6v1.6h-1.6zM1337.5 134.5h1.6v1.6h-1.6zM1337.5 158.6h1.6v1.6h-1.6zM1337.5 154.9h1.6v1.6h-1.6z" fill="#c8b850" stroke="#c8b850"/>
<path d="M819.1 117.8h1.6v1.6h-1.6zM822.7 117.8h1.6v1.6h-1.6zM822.7 114.1h1.6v1.6h-1.6zM822.7 110.4h1.6v1.6h-1.6zM822.7 106.7h1.6v1.6h-1.6zM828.7 117.8h1.6v1.6h-1.6zM832.3 117.8h1.6v1.6h-1.6zM838.2 117.8h1.6v1.6h-1.6zM841.9 117.8h1.6v1.6h-1.6zM847.9 117.8h1.6v1.6h-1.6zM851.5 117.8h1.6v1.6h-1.6zM857.5 117.8h1.6v1.6h-1.6zM861.1 117.8h1.6v1.6h-1.6zM867.1 117.8h1.6v1.6h-1.6zM870.7 117.8h1.6v1.6h-1.6zM870.7 114.1h1.6v1.6h-1.6zM870.7 110.4h1.6v1.6h-1.6zM870.7 106.7h1.6v1.6h-1.6zM876.7 117.8h1.6v1.6h-1.6zM876.7 114.1h1.6v1.6h-1.6zM876.7 110.4h1.6v1.6h-1.6zM876.7 106.7h1.6v1.6h-1.6zM880.3 117.8h1.6v1.6h-1.6zM880.3 114.1h1.6v1.6h-1.6zM880.3 110.4h1.6v1.6h-1.6zM880.3 106.7h1.6v1.6h-1.6zM886.2 117.8h1.6v1.6h-1.6zM886.2 114.1h1.6v1.6h-1.6zM886.2 110.4h1.6v1.6h-1.6zM889.9 117.8h1.6v1.6h-1.6zM889.9 114.1h1.6v1.6h-1.6zM889.9 110.4h1.6v1.6h-1.6zM895.9 117.8h1.6v1.6h-1.6zM899.5 117.8h1.6v1.6h-1.6zM899.5 114.1h1.6v1.6h-1.6zM905.5 117.8h1.6v1.6h-1.6zM905.5 114.1h1.6v1.6h-1.6zM905.5 110.4h1.6v1.6h-1.6zM909.1 117.8h1.6v1.6h-1.6zM915.1 117.8h1.6v1.6h-1.6zM918.7 117.8h1.6v1.6h-1.6zM924.6 117.8h1.6v1.6h-1.6zM928.3 117.8h1.6v1.6h-1.6zM934.2 117.8h1.6v1.6h-1.6zM937.9 117.8h1.6v1.6h-1.6zM943.9 117.8h1.6v1.6h-1.6zM943.9 114.1h1.6v1.6h-1.6zM943.9 110.4h1.6v1.6h-1.6zM947.5 117.8h1.6v1.6h-1.6zM947.5 114.1h1.6v1.6h-1.6zM947.5 110.4h1.6v1.6h-1.6zM947.5 106.7h1.6v1.6h-1.6zM953.5 117.8h1.6v1.6h-1.6zM953.5 114.1h1.6v1.6h-1.6zM953.5 110.4h1.6v1.6h-1.6zM953.5 106.7h1.6v1.6h-1.6zM957.1 117.8h1.6v1.6h-1.6zM957.1 114.1h1.6v1.6h-1.6zM957.1 110.4h1.6v1.6h-1.6zM957.1 106.7h1.6v1.6h-1.6zM963.1 117.8h1.6v1.6h-1.6zM963.1 114.1h1.6v1.6h-1.6zM963.1 110.4h1.6v1.6h-1.6zM963.1 106.7h1.6v1.6h-1.6zM966.7 117.8h1.6v1.6h-1.6zM966.7 114.1h1.6v1.6h-1.6zM966.7 110.4h1.6v1.6h-1.6zM966.7 106.7h1.6v1.6h-1.6zM972.6 117.8h1.6v1.6h-1.6zM972.6 114.1h1.6v1.6h-1.6zM976.3 117.8h1.6v1.6h-1.6zM982.2 117.8h1.6v1.6h-1.6zM985.9 117.8h1.6v1.6h-1.6zM985.9 114.1h1.6v1.6h-1.6zM991.9 117.8h1.6v1.6h-1.6zM995.5 117.8h1.6v1.6h-1.6zM995.5 114.1h1.6v1.6h-1.6zM995.5 110.4h1.6v1.6h-1.6zM995.5 106.7h1.6v1.6h-1.6zM1001.5 117.8h1.6v1.6h-1.6zM1005.1 117.8h1.6v1.6h-1.6zM1011.1 117.8h1.6v1.6h-1.6zM1014.7 117.8h1.6v1.6h-1.6zM1020.6 117.8h1.6v1.6h-1.6zM1024.3 117.8h1.6v1.6h-1.6zM1030.3 117.8h1.6v1.6h-1.6zM1033.9 117.8h1.6v1.6h-1.6zM1033.9 114.1h1.6v1.6h-1.6zM1033.9 110.4h1.6v1.6h-1.6zM1033.9 106.7h1.6v1.6h-1.6zM1039.9 117.8h1.6v1.6h-1.6zM1043.5 117.8h1.6v1.6h-1.6zM1049.5 117.8h1.6v1.6h-1.6zM1053.1 117.8h1.6v1.6h-1.6zM1059.1 117.8h1.6v1.6h-1.6zM1062.7 117.8h1.6v1.6h-1.6zM1068.7 117.8h1.6v1.6h-1.6zM1072.3 117.8h1.6v1.6h-1.6zM1078.3 117.8h1.6v1.6h-1.6zM1078.3 114.1h1.6v1.6h-1.6zM1078.3 110.4h1.6v1.6h-1.6zM1078.3 106.7h1.6v1.6h-1.6zM1081.9 117.8h1.6v1.6h-1.6zM1087.9 117.8h1.6v1.6h-1.6zM1091.5 117.8h1.6v1.6h-1.6zM1091.5 114.1h1.6v1.6h-1.6zM1097.5 117.8h1.6v1.6h-1.6zM1097.5 114.1h1.6v1.6h-1.6zM1097.5 110.4h1.6v1.6h-1.6zM1097.5 106.7h1.6v1.6h-1.6zM1101.1 117.8h1.6v1.6h-1.6zM1107.1 117.8h1.6v1.6h-1.6zM1107.1 114.1h1.6v1.6h-1.6zM1107.1 110.4h1.6v1.6h-1.6zM1110.7 117.8h1.6v1.6h-1.6zM1110.7 114.1h1.6v1.6h-1.6zM1110.7 110.4h1.6v1.6h-1.6zM1116.7 117.8h1.6v1.6h-1.6zM1116.7 114.1h1.6v1.6h-1.6zM1120.3 117.8h1.6v1.6h-1.6zM1120.3 114.1h1.6v1.6h-1.6zM1126.3 117.8h1.6v1.6h-1.6zM1126.3 114.1h1.6v1.6h-1.6zM1126.3 110.4h1.6v1.6h-1.6zM1126.3 106.7h1.6v1.6h-1.6zM1129.9 117.8h1.6v1.6h-1.6zM1129.9 114.1h1.6v1.6h-1.6zM1135.9 117.8h1.6v1.6h-1.6zM1135.9 114.1h1.6v1.6h-1.6zM1139.5 117.8h1.6v1.6h-1.6zM1139.5 114.1h1.6v1.6h-1.6zM1139.5 110.4h1.6v1.6h-1.6zM1145.5 117.8h1.6v1.6h-1.6zM1145.5 114.1h1.6v1.6h-1.6zM1145.5 110.4h1.6v1.6h-1.6zM1145.5 106.7h1.6v1.6h-1.6zM1149.1 117.8h1.6v1.6h-1.6zM1149.1 114.1h1.6v1.6h-1.6zM1149.1 110.4h1.6v1.6h-1.6zM1149.1 106.7h1.6v1.6h-1.6zM1155.1 117.8h1.6v1.6h-1.6zM1155.1 114.1h1.6v1.6h-1.6zM1158.7 117.8h1.6v1.6h-1.6zM1158.7 114.1h1.6v1.6h-1.6zM1164.7 117.8h1.6v1.6h-1.6zM1168.3 117.8h1.6v1.6h-1.6zM1174.3 117.8h1.6v1.6h-1.6zM1177.9 117.8h1.6v1.6h-1.6zM1183.9 117.8h1.6v1.6h-1.6zM1187.5 117.8h1.6v1.6h-1.6zM819.1 127.1h1.6v1.6h-1.6zM822.7 127.1h1.6v1.6h-1.6zM822.7 130.8h1.6v1.6h-1.6zM822.7 134.5h1.6v1.6h-1.6zM822.7 138.2h1.6v1.6h-1.6zM828.7 127.1h1.6v1.6h-1.6zM832.3 127.1h1.6v1.6h-1.6zM838.2 127.1h1.6v1.6h-1.6zM841.9 127.1h1.6v1.6h-1.6zM847.9 127.1h1.6v1.6h-1.6zM851.5 127.1h1.6v1.6h-1.6zM857.5 127.1h1.6v1.6h-1.6zM861.1 127.1h1.6v1.6h-1.6zM867.1 127.1h1.6v1.6h-1.6zM870.7 127.1h1.6v1.6h-1.6zM870.7 130.8h1.6v1.6h-1.6zM870.7 134.5h1.6v1.6h-1.6zM870.7 138.2h1.6v1.6h-1.6zM876.7 127.1h1.6v1.6h-1.6zM876.7 130.8h1.6v1.6h-1.6zM876.7 134.5h1.6v1.6h-1.6zM876.7 138.2h1.6v1.6h-1.6zM880.3 127.1h1.6v1.6h-1.6zM880.3 130.8h1.6v1.6h-1.6zM880.3 134.5h1.6v1.6h-1.6zM880.3 138.2h1.6v1.6h-1.6zM886.2 127.1h1.6v1.6h-1.6zM886.2 130.8h1.6v1.6h-1.6zM889.9 127.1h1.6v1.6h-1.6zM889.9 130.8h1.6v1.6h-1.6zM895.9 127.1h1.6v1.6h-1.6zM899.5 127.1h1.6v1.6h-1.6zM905.5 127.1h1.6v1.6h-1.6zM905.5 130.8h1.6v1.6h-1.6zM909.1 127.1h1.6v1.6h-1.6zM915.1 127.1h1.6v1.6h-1.6zM918.7 127.1h1.6v1.6h-1.6zM924.6 127.1h1.6v1.6h-1.6zM928.3 127.1h1.6v1.6h-1.6zM934.2 127.1h1.6v1.6h-1.6zM937.9 127.1h1.6v1.6h-1.6zM943.9 127.1h1.6v1.6h-1.6zM943.9 130.8h1.6v1.6h-1.6zM943.9 134.5h1.6v1.6h-1.6zM947.5 127.1h1.6v1.6h-1.6zM947.5 130.8h1.6v1.6h-1.6zM947.5 134.5h1.6v1.6h-1.6zM953.5 127.1h1.6v1.6h-1.6zM953.5 130.8h1.6v1.6h-1.6zM953.5 134.5h1.6v1.6h-1.6zM953.5 138.2h1.6v1.6h-1.6zM957.1 127.1h1.6v1.6h-1.6zM957.1 130.8h1.6v1.6h-1.6zM957.1 134.5h1.6v1.6h-1.6zM957.1 138.2h1.6v1.6h-1.6zM963.1 127.1h1.6v1.6h-1.6zM963.1 130.8h1.6v1.6h-1.6zM963.1 134.5h1.6v1.6h-1.6zM963.1 138.2h1.6v1.6h-1.6zM966.7 127.1h1.6v1.6h-1.6zM966.7 130.8h1.6v1.6h-1.6zM966.7 134.5h1.6v1.6h-1.6zM966.7 138.2h1.6v1.6h-1.6zM972.6 127.1h1.6v1.6h-1.6zM972.6 130.8h1.6v1.6h-1.6zM976.3 127.1h1.6v1.6h-1.6zM982.2 127.1h1.6v1.6h-1.6zM985.9 127.1h1.6v1.6h-1.6zM985.9 130.8h1.6v1.6h-1.6zM991.9 127.1h1.6v1.6h-1.6zM995.5 127.1h1.6v1.6h-1.6zM995.5 130.8h1.6v1.6h-1.6zM995.5 134.5h1.6v1.6h-1.6zM1001.5 127.1h1.6v1.6h-1.6zM1005.1 127.1h1.6v1.6h-1.6zM1011.1 127.1h1.6v1.6h-1.6zM1014.7 127.1h1.6v1.6h-1.6zM1020.6 127.1h1.6v1.6h-1.6zM1024.3 127.1h1.6v1.6h-1.6zM1030.3 127.1h1.6v1.6h-1.6zM1033.9 127.1h1.6v1.6h-1.6zM1033.9 130.8h1.6v1.6h-1.6zM1033.9 134.5h1.6v1.6h-1.6zM1033.9 138.2h1.6v1.6h-1.6zM1039.9 127.1h1.6v1.6h-1.6zM1043.5 127.1h1.6v1.6h-1.6zM1049.5 127.1h1.6v1.6h-1.6zM1053.1 127.1h1.6v1.6h-1.6zM1059.1 127.1h1.6v1.6h-1.6zM1062.7 127.1h1.6v1.6h-1.6zM1068.7 127.1h1.6v1.6h-1.6zM1072.3 127.1h1.6v1.6h-1.6zM1078.3 127.1h1.6v1.6h-1.6zM1078.3 130.8h1.6v1.6h-1.6zM1078.3 134.5h1.6v1.6h-1.6zM1078.3 138.2h1.6v1.6h-1.6zM1081.9 127.1h1.6v1.6h-1.6zM1087.9 127.1h1.6v1.6h-1.6zM1091.5 127.1h1.6v1.6h-1.6zM1091.5 130.8h1.6v1.6h-1.6zM1097.5 127.1h1.6v1.6h-1.6zM1097.5 130.8h1.6v1.6h-1.6zM1097.5 134.5h1.6v1.6h-1.6zM1101.1 127.1h1.6v1.6h-1.6zM1107.1 127.1h1.6v1.6h-1.6zM1107.1 130.8h1.6v1.6h-1.6zM1107.1 134.5h1.6v1.6h-1.6zM1110.7 127.1h1.6v1.6h-1.6zM1110.7 130.8h1.6v1.6h-1.6zM1110.7 134.5h1.6v1.6h-1.6zM1116.7 127.1h1.6v1.6h-1.6zM1116.7 130.8h1.6v1.6h-1.6zM1120.3 127.1h1.6v1.6h-1.6zM1120.3 130.8h1.6v1.6h-1.6zM1126.3 127.1h1.6v1.6h-1.6zM1126.3 130.8h1.6v1.6h-1.6zM1126.3 134.5h1.6v1.6h-1.6zM1129.9 127.1h1.6v1.6h-1.6zM1129.9 130.8h1.6v1.6h-1.6zM1135.9 127.1h1.6v1.6h-1.6zM1135.9 130.8h1.6v1.6h-1.6zM1139.5 127.1h1.6v1.6h-1.6zM1139.5 130.8h1.6v1.6h-1.6zM1145.5 127.1h1.6v1.6h-1.6zM1145.5 130.8h1.6v1.6h-1.6zM1145.5 134.5h1.6v1.6h-1.6zM1149.1 127.1h1.6v1.6h-1.6zM1149.1 130.8h1.6v1.6h-1.6zM1149.1 134.5h1.6v1.6h-1.6zM1155.1 127.1h1.6v1.6h-1.6zM1155.1 130.8h1.6v1.6h-1.6zM1158.7 127.1h1.6v1.6h-1.6zM1164.7 127.1h1.6v1.6h-1.6zM1168.3 127.1h1.6v1.6h-1.6zM1174.3 127.1h1.6v1.6h-1.6zM1177.9 127.1h1.6v1.6h-1.6zM1183.9 127.1h1.6v1.6h-1.6zM1187.5 127.1h1.6v1.6h-1.6z" fill="#7fb56f" stroke="#7fb56f"/>
<path d="M822.7 97.4h1.6v1.6h-1.6zM822.7 93.7h1.6v1.6h-1.6zM870.7 97.4h1.6v1.6h-1.6zM870.7 93.7h1.6v1.6h-1.6zM876.7 97.4h1.6v1.6h-1.6zM876.7 93.7h1.6v1.6h-1.6zM876.7 90.0h1.6v1.6h-1.6zM876.7 86.3h1.6v1.6h-1.6zM880.3 97.4h1.6v1.6h-1.6zM880.3 93.7h1.6v1.6h-1.6zM880.3 90.0h1.6v1.6h-1.6zM880.3 86.3h1.6v1.6h-1.6zM953.5 97.4h1.6v1.6h-1.6zM953.5 93.7h1.6v1.6h-1.6zM953.5 90.0h1.6v1.6h-1.6zM953.5 86.3h1.6v1.6h-1.6zM957.1 97.4h1.6v1.6h-1.6zM957.1 93.7h1.6v1.6h-1.6zM957.1 90.0h1.6v1.6h-1.6zM957.1 86.3h1.6v1.6h-1.6zM963.1 97.4h1.6v1.6h-1.6zM963.1 93.7h1.6v1.6h-1.6zM963.1 90.0h1.6v1.6h-1.6zM963.1 86.3h1.6v1.6h-1.6zM966.7 97.4h1.6v1.6h-1.6zM966.7 93.7h1.6v1.6h-1.6zM966.7 90.0h1.6v1.6h-1.6zM966.7 86.3h1.6v1.6h-1.6zM1033.9 97.4h1.6v1.6h-1.6zM1078.3 97.4h1.6v1.6h-1.6zM1078.3 93.7h1.6v1.6h-1.6zM1078.3 90.0h1.6v1.6h-1.6zM1078.3 86.3h1.6v1.6h-1.6z" fill="#b6b85e" stroke="#b6b85e"/>
<path d="M876.7 77.0h1.6v1.6h-1.6zM876.7 73.3h1.6v1.6h-1.6zM876.7 69.6h1.6v1.6h-1.6zM876.7 65.9h1.6v1.6h-1.6zM880.3 77.0h1.6v1.6h-1.6zM880.3 73.3h1.6v1.6h-1.6zM880.3 69.6h1.6v1.6h-1.6zM880.3 65.9h1.6v1.6h-1.6zM953.5 77.0h1.6v1.6h-1.6zM953.5 73.3h1.6v1.6h-1.6zM953.5 69.6h1.6v1.6h-1.6zM957.1 77.0h1.6v1.6h-1.6zM957.1 73.3h1.6v1.6h-1.6zM957.1 69.6h1.6v1.6h-1.6zM957.1 65.9h1.6v1.6h-1.6zM963.1 77.0h1.6v1.6h-1.6zM963.1 73.3h1.6v1.6h-1.6zM963.1 69.6h1.6v1.6h-1.6zM963.1 65.9h1.6v1.6h-1.6zM1078.3 77.0h1.6v1.6h-1.6z" fill="#d8a850" stroke="#d8a850"/>
<path d="M876.7 56.6h1.6v1.6h-1.6zM876.7 52.9h1.6v1.6h-1.6zM880.3 56.6h1.6v1.6h-1.6zM880.3 52.9h1.6v1.6h-1.6zM880.3 49.2h1.6v1.6h-1.6zM957.1 56.6h1.6v1.6h-1.6zM957.1 52.9h1.6v1.6h-1.6zM957.1 49.2h1.6v1.6h-1.6zM957.1 45.5h1.6v1.6h-1.6zM963.1 56.6h1.6v1.6h-1.6zM963.1 52.9h1.6v1.6h-1.6zM963.1 49.2h1.6v1.6h-1.6zM876.7 167.9h1.6v1.6h-1.6zM876.7 171.6h1.6v1.6h-1.6zM876.7 175.3h1.6v1.6h-1.6zM880.3 167.9h1.6v1.6h-1.6zM880.3 171.6h1.6v1.6h-1.6zM880.3 175.3h1.6v1.6h-1.6zM880.3 179.0h1.6v1.6h-1.6zM957.1 167.9h1.6v1.6h-1.6zM957.1 171.6h1.6v1.6h-1.6zM957.1 175.3h1.6v1.6h-1.6zM957.1 179.0h1.6v1.6h-1.6zM963.1 167.9h1.6v1.6h-1.6zM963.1 171.6h1.6v1.6h-1.6zM963.1 175.3h1.6v1.6h-1.6zM963.1 179.0h1.6v1.6h-1.6z" fill="#d97048" stroke="#d97048"/>
<path d="M957.1 36.2h1.6v1.6h-1.6zM957.1 188.3h1.6v1.6h-1.6zM957.1 192.0h1.6v1.6h-1.6z" fill="#dc4848" stroke="#dc4848"/>
<path d="M822.7 147.5h1.6v1.6h-1.6zM870.7 147.5h1.6v1.6h-1.6zM876.7 147.5h1.6v1.6h-1.6zM876.7 151.2h1.6v1.6h-1.6zM876.7 154.9h1.6v1.6h-1.6zM876.7 158.6h1.6v1.6h-1.6zM880.3 147.5h1.6v1.6h-1.6zM880.3 151.2h1.6v1.6h-1.6zM880.3 154.9h1.6v1.6h-1.6zM880.3 158.6h1.6v1.6h-1.6zM953.5 147.5h1.6v1.6h-1.6zM953.5 151.2h1.6v1.6h-1.6zM953.5 154.9h1.6v1.6h-1.6zM953.5 158.6h1.6v1.6h-1.6zM957.1 147.5h1.6v1.6h-1.6zM957.1 151.2h1.6v1.6h-1.6zM957.1 154.9h1.6v1.6h-1.6zM957.1 158.6h1.6v1.6h-1.6zM963.1 147.5h1.6v1.6h-1.6zM963.1 151.2h1.6v1.6h-1.6zM963.1 154.9h1.6v1.6h-1.6zM963.1 158.6h1.6v1.6h-1.6zM966.7 147.5h1.6v1.6h-1.6zM966.7 151.2h1.6v1.6h-1.6zM1078.3 147.5h1.6v1.6h-1.6zM1078.3 151.2h1.6v1.6h-1.6zM1078.3 154.9h1.6v1.6h-1.6z" fill="#c8b455" stroke="#c8b455"/>
<path d="M22.2 301.4h1.6v1.6h-1.6zM25.9 301.4h1.6v1.6h-1.6zM31.8 301.4h1.6v1.6h-1.6zM35.5 301.4h1.6v1.6h-1.6zM41.5 301.4h1.6v1.6h-1.6zM45.1 301.4h1.6v1.6h-1.6zM51.1 301.4h1.6v1.6h-1.6zM54.7 301.4h1.6v1.6h-1.6zM60.6 301.4h1.6v1.6h-1.6zM64.3 301.4h1.6v1.6h-1.6zM70.3 301.4h1.6v1.6h-1.6zM73.9 301.4h1.6v1.6h-1.6zM79.9 301.4h1.6v1.6h-1.6zM83.5 301.4h1.6v1.6h-1.6zM89.5 301.4h1.6v1.6h-1.6zM93.1 301.4h1.6v1.6h-1.6zM99.1 301.4h1.6v1.6h-1.6zM102.7 301.4h1.6v1.6h-1.6zM108.7 301.4h1.6v1.6h-1.6zM112.3 301.4h1.6v1.6h-1.6zM118.2 301.4h1.6v1.6h-1.6zM121.9 301.4h1.6v1.6h-1.6zM127.9 301.4h1.6v1.6h-1.6zM131.5 301.4h1.6v1.6h-1.6zM137.4 301.4h1.6v1.6h-1.6zM141.1 301.4h1.6v1.6h-1.6zM147.0 301.4h1.6v1.6h-1.6zM150.7 301.4h1.6v1.6h-1.6zM156.6 301.4h1.6v1.6h-1.6zM160.3 301.4h1.6v1.6h-1.6zM166.2 301.4h1.6v1.6h-1.6zM169.9 301.4h1.6v1.6h-1.6zM175.8 301.4h1.6v1.6h-1.6zM179.5 301.4h1.6v1.6h-1.6zM185.4 301.4h1.6v1.6h-1.6zM189.1 301.4h1.6v1.6h-1.6zM195.0 301.4h1.6v1.6h-1.6zM198.7 301.4h1.6v1.6h-1.6zM204.6 301.4h1.6v1.6h-1.6zM208.3 301.4h1.6v1.6h-1.6zM214.2 301.4h1.6v1.6h-1.6zM217.9 301.4h1.6v1.6h-1.6zM223.8 301.4h1.6v1.6h-1.6zM227.5 301.4h1.6v1.6h-1.6zM233.4 301.4h1.6v1.6h-1.6zM237.1 301.4h1.6v1.6h-1.6zM243.0 301.4h1.6v1.6h-1.6zM246.7 301.4h1.6v1.6h-1.6zM252.6 301.4h1.6v1.6h-1.6zM256.3 301.4h1.6v1.6h-1.6zM262.2 301.4h1.6v1.6h-1.6zM265.9 301.4h1.6v1.6h-1.6zM271.8 301.4h1.6v1.6h-1.6zM275.5 301.4h1.6v1.6h-1.6z" fill="#8e3838" stroke="#8e3838"/>
<path d="M22.2 342.2h1.6v1.6h-1.6zM22.2 338.5h1.6v1.6h-1.6zM22.2 334.8h1.6v1.6h-1.6zM22.2 331.1h1.6v1.6h-1.6zM25.9 342.2h1.6v1.6h-1.6zM25.9 338.5h1.6v1.6h-1.6zM25.9 334.8h1.6v1.6h-1.6zM25.9 331.1h1.6v1.6h-1.6zM31.8 342.2h1.6v1.6h-1.6zM31.8 338.5h1.6v1.6h-1.6zM31.8 334.8h1.6v1.6h-1.6zM31.8 331.1h1.6v1.6h-1.6zM35.5 342.2h1.6v1.6h-1.6zM35.5 338.5h1.6v1.6h-1.6zM35.5 334.8h1.6v1.6h-1.6zM35.5 331.1h1.6v1.6h-1.6zM41.5 342.2h1.6v1.6h-1.6zM41.5 338.5h1.6v1.6h-1.6zM41.5 334.8h1.6v1.6h-1.6zM41.5 331.1h1.6v1.6h-1.6zM45.1 342.2h1.6v1.6h-1.6zM45.1 338.5h1.6v1.6h-1.6zM45.1 334.8h1.6v1.6h-1.6zM45.1 331.1h1.6v1.6h-1.6zM51.1 342.2h1.6v1.6h-1.6zM51.1 338.5h1.6v1.6h-1.6zM54.7 342.2h1.6v1.6h-1.6zM54.7 338.5h1.6v1.6h-1.6zM60.6 342.2h1.6v1.6h-1.6zM60.6 338.5h1.6v1.6h-1.6zM64.3 342.2h1.6v1.6h-1.6zM64.3 338.5h1.6v1.6h-1.6zM70.3 342.2h1.6v1.6h-1.6zM70.3 338.5h1.6v1.6h-1.6zM73.9 342.2h1.6v1.6h-1.6zM73.9 338.5h1.6v1.6h-1.6zM73.9 334.8h1.6v1.6h-1.6zM79.9 342.2h1.6v1.6h-1.6zM79.9 338.5h1.6v1.6h-1.6zM79.9 334.8h1.6v1.6h-1.6zM79.9 331.1h1.6v1.6h-1.6zM83.5 342.2h1.6v1.6h-1.6zM83.5 338.5h1.6v1.6h-1.6zM83.5 334.8h1.6v1.6h-1.6zM83.5 331.1h1.6v1.6h-1.6zM89.5 342.2h1.6v1.6h-1.6zM89.5 338.5h1.6v1.6h-1.6zM89.5 334.8h1.6v1.6h-1.6zM89.5 331.1h1.6v1.6h-1.6zM93.1 342.2h1.6v1.6h-1.6zM93.1 338.5h1.6v1.6h-1.6zM93.1 334.8h1.6v1.6h-1.6zM93.1 331.1h1.6v1.6h-1.6zM99.1 342.2h1.6v1.6h-1.6zM99.1 338.5h1.6v1.6h-1.6zM99.1 334.8h1.6v1.6h-1.6zM99.1 331.1h1.6v1.6h-1.6zM102.7 342.2h1.6v1.6h-1.6zM102.7 338.5h1.6v1.6h-1.6zM102.7 334.8h1.6v1.6h-1.6zM102.7 331.1h1.6v1.6h-1.6zM108.7 342.2h1.6v1.6h-1.6zM108.7 338.5h1.6v1.6h-1.6zM108.7 334.8h1.6v1.6h-1.6zM108.7 331.1h1.6v1.6h-1.6zM112.3 342.2h1.6v1.6h-1.6zM112.3 338.5h1.6v1.6h-1.6zM112.3 334.8h1.6v1.6h-1.6zM112.3 331.1h1.6v1.6h-1.6zM118.2 342.2h1.6v1.6h-1.6zM118.2 338.5h1.6v1.6h-1.6zM118.2 334.8h1.6v1.6h-1.6zM118.2 331.1h1.6v1.6h-1.6zM121.9 342.2h1.6v1.6h-1.6zM121.9 338.5h1.6v1.6h-1.6zM121.9 334.8h1.6v1.6h-1.6zM121.9 331.1h1.6v1.6h-1.6zM127.9 342.2h1.6v1.6h-1.6zM127.9 338.5h1.6v1.6h-1.6zM127.9 334.8h1.6v1.6h-1.6zM127.9 331.1h1.6v1.6h-1.6zM131.5 342.2h1.6v1.6h-1.6zM131.5 338.5h1.6v1.6h-1.6zM131.5 334.8h1.6v1.6h-1.6zM131.5 331.1h1.6v1.6h-1.6zM137.4 342.2h1.6v1.6h-1.6zM137.4 338.5h1.6v1.6h-1.6zM137.4 334.8h1.6v1.6h-1.6zM137.4 331.1h1.6v1.6h-1.6zM141.1 342.2h1.6v1.6h-1.6zM141.1 338.5h1.6v1.6h-1.6zM141.1 334.8h1.6v1.6h-1.6zM141.1 331.1h1.6v1.6h-1.6zM147.0 342.2h1.6v1.6h-1.6zM147.0 338.5h1.6v1.6h-1.6zM147.0 334.8h1.6v1.6h-1.6zM147.0 331.1h1.6v1.6h-1.6zM150.7 342.2h1.6v1.6h-1.6zM150.7 338.5h1.6v1.6h-1.6zM150.7 334.8h1.6v1.6h-1.6zM150.7 331.1h1.6v1.6h-1.6zM156.6 342.2h1.6v1.6h-1.6zM156.6 338.5h1.6v1.6h-1.6zM156.6 334.8h1.6v1.6h-1.6zM156.6 331.1h1.6v1.6h-1.6zM160.3 342.2h1.6v1.6h-1.6zM160.3 338.5h1.6v1.6h-1.6zM160.3 334.8h1.6v1.6h-1.6zM160.3 331.1h1.6v1.6h-1.6zM166.2 342.2h1.6v1.6h-1.6zM166.2 338.5h1.6v1.6h-1.6zM166.2 334.8h1.6v1.6h-1.6zM166.2 331.1h1.6v1.6h-1.6zM169.9 342.2h1.6v1.6h-1.6zM169.9 338.5h1.6v1.6h-1.6zM169.9 334.8h1.6v1.6h-1.6zM169.9 331.1h1.6v1.6h-1.6zM175.8 342.2h1.6v1.6h-1.6zM175.8 338.5h1.6v1.6h-1.6zM175.8 334.8h1.6v1.6h-1.6zM175.8 331.1h1.6v1.6h-1.6zM179.5 342.2h1.6v1.6h-1.6zM179.5 338.5h1.6v1.6h-1.6zM179.5 334.8h1.6v1.6h-1.6zM179.5 331.1h1.6v1.6h-1.6zM185.4 342.2h1.6v1.6h-1.6zM185.4 338.5h1.6v1.6h-1.6zM185.4 334.8h1.6v1.6h-1.6zM185.4 331.1h1.6v1.6h-1.6zM189.1 342.2h1.6v1.6h-1.6zM189.1 338.5h1.6v1.6h-1.6zM189.1 334.8h1.6v1.6h-1.6zM189.1 331.1h1.6v1.6h-1.6zM195.0 342.2h1.6v1.6h-1.6zM195.0 338.5h1.6v1.6h-1.6zM195.0 334.8h1.6v1.6h-1.6zM195.0 331.1h1.6v1.6h-1.6zM198.7 342.2h1.6v1.6h-1.6zM198.7 338.5h1.6v1.6h-1.6zM198.7 334.8h1.6v1.6h-1.6zM198.7 331.1h1.6v1.6h-1.6zM204.6 342.2h1.6v1.6h-1.6zM204.6 338.5h1.6v1.6h-1.6zM204.6 334.8h1.6v1.6h-1.6zM204.6 331.1h1.6v1.6h-1.6zM208.3 342.2h1.6v1.6h-1.6zM208.3 338.5h1.6v1.6h-1.6zM208.3 334.8h1.6v1.6h-1.6zM208.3 331.1h1.6v1.6h-1.6zM214.2 342.2h1.6v1.6h-1.6zM214.2 338.5h1.6v1.6h-1.6zM214.2 334.8h1.6v1.6h-1.6zM214.2 331.1h1.6v1.6h-1.6zM217.9 342.2h1.6v1.6h-1.6zM217.9 338.5h1.6v1.6h-1.6zM217.9 334.8h1.6v1.6h-1.6zM217.9 331.1h1.6v1.6h-1.6zM223.8 342.2h1.6v1.6h-1.6zM223.8 338.5h1.6v1.6h-1.6zM223.8 334.8h1.6v1.6h-1.6zM223.8 331.1h1.6v1.6h-1.6zM227.5 342.2h1.6v1.6h-1.6zM227.5 338.5h1.6v1.6h-1.6zM227.5 334.8h1.6v1.6h-1.6zM227.5 331.1h1.6v1.6h-1.6zM233.4 342.2h1.6v1.6h-1.6zM233.4 338.5h1.6v1.6h-1.6zM233.4 334.8h1.6v1.6h-1.6zM233.4 331.1h1.6v1.6h-1.6zM237.1 342.2h1.6v1.6h-1.6zM237.1 338.5h1.6v1.6h-1.6zM237.1 334.8h1.6v1.6h-1.6zM237.1 331.1h1.6v1.6h-1.6zM243.0 342.2h1.6v1.6h-1.6zM243.0 338.5h1.6v1.6h-1.6zM243.0 334.8h1.6v1.6h-1.6zM243.0 331.1h1.6v1.6h-1.6zM246.7 342.2h1.6v1.6h-1.6zM246.7 338.5h1.6v1.6h-1.6zM246.7 334.8h1.6v1.6h-1.6zM246.7 331.1h1.6v1.6h-1.6zM252.6 342.2h1.6v1.6h-1.6zM252.6 338.5h1.6v1.6h-1.6zM252.6 334.8h1.6v1.6h-1.6zM252.6 331.1h1.6v1.6h-1.6zM256.3 342.2h1.6v1.6h-1.6zM256.3 338.5h1.6v1.6h-1.6zM256.3 334.8h1.6v1.6h-1.6zM256.3 331.1h1.6v1.6h-1.6zM262.2 342.2h1.6v1.6h-1.6zM262.2 338.5h1.6v1.6h-1.6zM262.2 334.8h1.6v1.6h-1.6zM262.2 331.1h1.6v1.6h-1.6zM265.9 342.2h1.6v1.6h-1.6zM265.9 338.5h1.6v1.6h-1.6zM265.9 334.8h1.6v1.6h-1.6zM265.9 331.1h1.6v1.6h-1.6zM271.8 342.2h1.6v1.6h-1.6zM271.8 338.5h1.6v1.6h-1.6zM271.8 334.8h1.6v1.6h-1.6zM271.8 331.1h1.6v1.6h-1.6zM275.5 342.2h1.6v1.6h-1.6zM275.5 338.5h1.6v1.6h-1.6zM275.5 334.8h1.6v1.6h-1.6zM275.5 331.1h1.6v1.6h-1.6z" fill="#d9a21e" stroke="#d9a21e"/>
<path d="M22.2 383.0h1.6v1.6h-1.6zM25.9 383.0h1.6v1.6h-1.6zM31.8 383.0h1.6v1.6h-1.6zM35.5 383.0h1.6v1.6h-1.6zM41.5 383.0h1.6v1.6h-1.6zM45.1 383.0h1.6v1.6h-1.6zM51.1 383.0h1.6v1.6h-1.6zM54.7 383.0h1.6v1.6h-1.6zM54.7 379.3h1.6v1.6h-1.6zM60.6 383.0h1.6v1.6h-1.6zM60.6 379.3h1.6v1.6h-1.6zM64.3 383.0h1.6v1.6h-1.6zM64.3 379.3h1.6v1.6h-1.6zM70.3 383.0h1.6v1.6h-1.6zM70.3 379.3h1.6v1.6h-1.6zM73.9 383.0h1.6v1.6h-1.6zM73.9 379.3h1.6v1.6h-1.6zM79.9 383.0h1.6v1.6h-1.6zM79.9 379.3h1.6v1.6h-1.6zM83.5 383.0h1.6v1.6h-1.6zM83.5 379.3h1.6v1.6h-1.6zM89.5 383.0h1.6v1.6h-1.6zM89.5 379.3h1.6v1.6h-1.6zM93.1 383.0h1.6v1.6h-1.6zM93.1 379.3h1.6v1.6h-1.6zM99.1 383.0h1.6v1.6h-1.6zM99.1 379.3h1.6v1.6h-1.6zM102.7 383.0h1.6v1.6h-1.6zM102.7 379.3h1.6v1.6h-1.6zM108.7 383.0h1.6v1.6h-1.6zM108.7 379.3h1.6v1.6h-1.6zM112.3 383.0h1.6v1.6h-1.6zM112.3 379.3h1.6v1.6h-1.6zM118.2 383.0h1.6v1.6h-1.6zM118.2 379.3h1.6v1.6h-1.6zM121.9 383.0h1.6v1.6h-1.6zM121.9 379.3h1.6v1.6h-1.6zM127.9 383.0h1.6v1.6h-1.6zM127.9 379.3h1.6v1.6h-1.6zM131.5 383.0h1.6v1.6h-1.6zM131.5 379.3h1.6v1.6h-1.6zM137.4 383.0h1.6v1.6h-1.6zM137.4 379.3h1.6v1.6h-1.6zM141.1 383.0h1.6v1.6h-1.6zM141.1 379.3h1.6v1.6h-1.6zM147.0 383.0h1.6v1.6h-1.6zM147.0 379.3h1.6v1.6h-1.6zM150.7 383.0h1.6v1.6h-1.6zM150.7 379.3h1.6v1.6h-1.6zM156.6 383.0h1.6v1.6h-1.6zM156.6 379.3h1.6v1.6h-1.6zM160.3 383.0h1.6v1.6h-1.6zM160.3 379.3h1.6v1.6h-1.6zM166.2 383.0h1.6v1.6h-1.6zM166.2 379.3h1.6v1.6h-1.6zM169.9 383.0h1.6v1.6h-1.6zM169.9 379.3h1.6v1.6h-1.6zM175.8 383.0h1.6v1.6h-1.6zM175.8 379.3h1.6v1.6h-1.6zM179.5 383.0h1.6v1.6h-1.6zM179.5 379.3h1.6v1.6h-1.6zM185.4 383.0h1.6v1.6h-1.6zM185.4 379.3h1.6v1.6h-1.6zM189.1 383.0h1.6v1.6h-1.6zM189.1 379.3h1.6v1.6h-1.6zM195.0 383.0h1.6v1.6h-1.6zM195.0 379.3h1.6v1.6h-1.6zM198.7 383.0h1.6v1.6h-1.6zM198.7 379.3h1.6v1.6h-1.6zM204.6 383.0h1.6v1.6h-1.6zM204.6 379.3h1.6v1.6h-1.6zM208.3 383.0h1.6v1.6h-1.6zM208.3 379.3h1.6v1.6h-1.6zM214.2 383.0h1.6v1.6h-1.6zM214.2 379.3h1.6v1.6h-1.6zM217.9 383.0h1.6v1.6h-1.6zM217.9 379.3h1.6v1.6h-1.6zM223.8 383.0h1.6v1.6h-1.6zM223.8 379.3h1.6v1.6h-1.6zM227.5 383.0h1.6v1.6h-1.6zM227.5 379.3h1.6v1.6h-1.6zM233.4 383.0h1.6v1.6h-1.6zM233.4 379.3h1.6v1.6h-1.6zM237.1 383.0h1.6v1.6h-1.6zM237.1 379.3h1.6v1.6h-1.6zM243.0 383.0h1.6v1.6h-1.6zM243.0 379.3h1.6v1.6h-1.6zM246.7 383.0h1.6v1.6h-1.6zM246.7 379.3h1.6v1.6h-1.6zM252.6 383.0h1.6v1.6h-1.6zM252.6 379.3h1.6v1.6h-1.6zM256.3 383.0h1.6v1.6h-1.6zM256.3 379.3h1.6v1.6h-1.6zM262.2 383.0h1.6v1.6h-1.6zM262.2 379.3h1.6v1.6h-1.6zM265.9 383.0h1.6v1.6h-1.6zM265.9 379.3h1.6v1.6h-1.6zM271.8 383.0h1.6v1.6h-1.6zM271.8 379.3h1.6v1.6h-1.6zM275.5 383.0h1.6v1.6h-1.6zM275.5 379.3h1.6v1.6h-1.6z" fill="#3b93c4" stroke="#3b93c4"/>
<path d="M22.2 423.8h1.6v1.6h-1.6zM22.2 420.1h1.6v1.6h-1.6zM22.2 416.4h1.6v1.6h-1.6zM22.2 412.7h1.6v1.6h-1.6zM25.9 423.8h1.6v1.6h-1.6zM25.9 420.1h1.6v1.6h-1.6zM25.9 416.4h1.6v1.6h-1.6zM25.9 412.7h1.6v1.6h-1.6zM31.8 423.8h1.6v1.6h-1.6zM31.8 420.1h1.6v1.6h-1.6zM31.8 416.4h1.6v1.6h-1.6zM31.8 412.7h1.6v1.6h-1.6zM35.5 423.8h1.6v1.6h-1.6zM35.5 420.1h1.6v1.6h-1.6zM35.5 416.4h1.6v1.6h-1.6zM35.5 412.7h1.6v1.6h-1.6zM41.5 423.8h1.6v1.6h-1.6zM41.5 420.1h1.6v1.6h-1.6zM41.5 416.4h1.6v1.6h-1.6zM41.5 412.7h1.6v1.6h-1.6zM45.1 423.8h1.6v1.6h-1.6zM45.1 420.1h1.6v1.6h-1.6zM51.1 423.8h1.6v1.6h-1.6zM51.1 420.1h1.6v1.6h-1.6zM54.7 423.8h1.6v1.6h-1.6zM54.7 420.1h1.6v1.6h-1.6zM60.6 423.8h1.6v1.6h-1.6zM60.6 420.1h1.6v1.6h-1.6zM64.3 423.8h1.6v1.6h-1.6zM64.3 420.1h1.6v1.6h-1.6zM70.3 423.8h1.6v1.6h-1.6zM70.3 420.1h1.6v1.6h-1.6zM73.9 423.8h1.6v1.6h-1.6zM73.9 420.1h1.6v1.6h-1.6zM79.9 423.8h1.6v1.6h-1.6zM79.9 420.1h1.6v1.6h-1.6zM79.9 416.4h1.6v1.6h-1.6zM83.5 423.8h1.6v1.6h-1.6zM83.5 420.1h1.6v1.6h-1.6zM83.5 416.4h1.6v1.6h-1.6zM83.5 412.7h1.6v1.6h-1.6zM89.5 423.8h1.6v1.6h-1.6zM89.5 420.1h1.6v1.6h-1.6zM89.5 416.4h1.6v1.6h-1.6zM89.5 412.7h1.6v1.6h-1.6zM93.1 423.8h1.6v1.6h-1.6zM93.1 420.1h1.6v1.6h-1.6zM93.1 416.4h1.6v1.6h-1.6zM93.1 412.7h1.6v1.6h-1.6zM99.1 423.8h1.6v1.6h-1.6zM99.1 420.1h1.6v1.6h-1.6zM99.1 416.4h1.6v1.6h-1.6zM99.1 412.7h1.6v1.6h-1.6zM102.7 423.8h1.6v1.6h-1.6zM102.7 420.1h1.6v1.6h-1.6zM102.7 416.4h1.6v1.6h-1.6zM102.7 412.7h1.6v1.6h-1.6zM108.7 423.8h1.6v1.6h-1.6zM108.7 420.1h1.6v1.6h-1.6zM108.7 416.4h1.6v1.6h-1.6zM108.7 412.7h1.6v1.6h-1.6zM112.3 423.8h1.6v1.6h-1.6zM112.3 420.1h1.6v1.6h-1.6zM112.3 416.4h1.6v1.6h-1.6zM112.3 412.7h1.6v1.6h-1.6zM118.2 423.8h1.6v1.6h-1.6zM118.2 420.1h1.6v1.6h-1.6zM118.2 416.4h1.6v1.6h-1.6zM118.2 412.7h1.6v1.6h-1.6zM121.9 423.8h1.6v1.6h-1.6zM121.9 420.1h1.6v1.6h-1.6zM127.9 423.8h1.6v1.6h-1.6zM127.9 420.1h1.6v1.6h-1.6zM131.5 423.8h1.6v1.6h-1.6zM131.5 420.1h1.6v1.6h-1.6zM137.4 423.8h1.6v1.6h-1.6zM137.4 420.1h1.6v1.6h-1.6zM141.1 423.8h1.6v1.6h-1.6zM141.1 420.1h1.6v1.6h-1.6zM147.0 423.8h1.6v1.6h-1.6zM147.0 420.1h1.6v1.6h-1.6zM150.7 423.8h1.6v1.6h-1.6zM150.7 420.1h1.6v1.6h-1.6zM156.6 423.8h1.6v1.6h-1.6zM156.6 420.1h1.6v1.6h-1.6zM160.3 423.8h1.6v1.6h-1.6zM160.3 420.1h1.6v1.6h-1.6zM166.2 423.8h1.6v1.6h-1.6zM166.2 420.1h1.6v1.6h-1.6zM169.9 423.8h1.6v1.6h-1.6zM169.9 420.1h1.6v1.6h-1.6zM175.8 423.8h1.6v1.6h-1.6zM175.8 420.1h1.6v1.6h-1.6zM179.5 423.8h1.6v1.6h-1.6zM179.5 420.1h1.6v1.6h-1.6zM185.4 423.8h1.6v1.6h-1.6zM185.4 420.1h1.6v1.6h-1.6zM189.1 423.8h1.6v1.6h-1.6zM189.1 420.1h1.6v1.6h-1.6zM195.0 423.8h1.6v1.6h-1.6zM195.0 420.1h1.6v1.6h-1.6zM198.7 423.8h1.6v1.6h-1.6zM198.7 420.1h1.6v1.6h-1.6zM204.6 423.8h1.6v1.6h-1.6zM204.6 420.1h1.6v1.6h-1.6zM208.3 423.8h1.6v1.6h-1.6zM208.3 420.1h1.6v1.6h-1.6zM214.2 423.8h1.6v1.6h-1.6zM214.2 420.1h1.6v1.6h-1.6zM217.9 423.8h1.6v1.6h-1.6zM217.9 420.1h1.6v1.6h-1.6zM223.8 423.8h1.6v1.6h-1.6zM223.8 420.1h1.6v1.6h-1.6zM227.5 423.8h1.6v1.6h-1.6zM227.5 420.1h1.6v1.6h-1.6zM233.4 423.8h1.6v1.6h-1.6zM233.4 420.1h1.6v1.6h-1.6zM237.1 423.8h1.6v1.6h-1.6zM237.1 420.1h1.6v1.6h-1.6zM243.0 423.8h1.6v1.6h-1.6zM243.0 420.1h1.6v1.6h-1.6zM246.7 423.8h1.6v1.6h-1.6zM246.7 420.1h1.6v1.6h-1.6zM252.6 423.8h1.6v1.6h-1.6zM252.6 420.1h1.6v1.6h-1.6zM252.6 416.4h1.6v1.6h-1.6zM252.6 412.7h1.6v1.6h-1.6zM256.3 423.8h1.6v1.6h-1.6zM256.3 420.1h1.6v1.6h-1.6zM256.3 416.4h1.6v1.6h-1.6zM256.3 412.7h1.6v1.6h-1.6zM262.2 423.8h1.6v1.6h-1.6zM262.2 420.1h1.6v1.6h-1.6zM262.2 416.4h1.6v1.6h-1.6zM262.2 412.7h1.6v1.6h-1.6zM265.9 423.8h1.6v1.6h-1.6zM265.9 420.1h1.6v1.6h-1.6zM265.9 416.4h1.6v1.6h-1.6zM265.9 412.7h1.6v1.6h-1.6zM271.8 423.8h1.6v1.6h-1.6zM271.8 420.1h1.6v1.6h-1.6zM271.8 416.4h1.6v1.6h-1.6zM271.8 412.7h1.6v1.6h-1.6zM275.5 423.8h1.6v1.6h-1.6zM275.5 420.1h1.6v1.6h-1.6zM275.5 416.4h1.6v1.6h-1.6zM275.5 412.7h1.6v1.6h-1.6z" fill="#86b752" stroke="#86b752"/>
<path d="M415.8 281.0h1.6v1.6h-1.6zM419.5 281.0h1.6v1.6h-1.6zM425.4 281.0h1.6v1.6h-1.6zM429.1 281.0h1.6v1.6h-1.6zM435.0 281.0h1.6v1.6h-1.6zM438.7 281.0h1.6v1.6h-1.6zM505.9 281.0h1.6v1.6h-1.6zM550.2 281.0h1.6v1.6h-1.6z" fill="#c09a28" stroke="#c09a28"/>
<path d="M41.5 587.0h1.6v1.6h-1.6zM45.1 587.0h1.6v1.6h-1.6zM51.1 587.0h1.6v1.6h-1.6zM54.7 587.0h1.6v1.6h-1.6zM60.6 587.0h1.6v1.6h-1.6zM64.3 587.0h1.6v1.6h-1.6zM70.3 587.0h1.6v1.6h-1.6zM73.9 587.0h1.6v1.6h-1.6zM79.9 587.0h1.6v1.6h-1.6zM83.5 587.0h1.6v1.6h-1.6zM89.5 587.0h1.6v1.6h-1.6zM93.1 587.0h1.6v1.6h-1.6zM99.1 587.0h1.6v1.6h-1.6zM102.7 587.0h1.6v1.6h-1.6zM108.7 587.0h1.6v1.6h-1.6zM112.3 587.0h1.6v1.6h-1.6zM118.2 587.0h1.6v1.6h-1.6zM121.9 587.0h1.6v1.6h-1.6zM127.9 587.0h1.6v1.6h-1.6zM131.5 587.0h1.6v1.6h-1.6zM137.4 587.0h1.6v1.6h-1.6zM141.1 587.0h1.6v1.6h-1.6zM147.0 587.0h1.6v1.6h-1.6zM150.7 587.0h1.6v1.6h-1.6zM156.6 587.0h1.6v1.6h-1.6zM160.3 587.0h1.6v1.6h-1.6zM166.2 587.0h1.6v1.6h-1.6zM169.9 587.0h1.6v1.6h-1.6zM175.8 587.0h1.6v1.6h-1.6zM179.5 587.0h1.6v1.6h-1.6zM179.5 583.3h1.6v1.6h-1.6zM179.5 579.6h1.6v1.6h-1.6zM185.4 587.0h1.6v1.6h-1.6zM185.4 583.3h1.6v1.6h-1.6zM185.4 579.6h1.6v1.6h-1.6zM185.4 575.9h1.6v1.6h-1.6zM189.1 587.0h1.6v1.6h-1.6zM189.1 583.3h1.6v1.6h-1.6zM189.1 579.6h1.6v1.6h-1.6zM189.1 575.9h1.6v1.6h-1.6zM195.0 587.0h1.6v1.6h-1.6zM198.7 587.0h1.6v1.6h-1.6zM204.6 587.0h1.6v1.6h-1.6zM208.3 587.0h1.6v1.6h-1.6zM214.2 587.0h1.6v1.6h-1.6zM217.9 587.0h1.6v1.6h-1.6zM223.8 587.0h1.6v1.6h-1.6zM227.5 587.0h1.6v1.6h-1.6zM233.4 587.0h1.6v1.6h-1.6zM237.1 587.0h1.6v1.6h-1.6zM243.0 587.0h1.6v1.6h-1.6zM246.7 587.0h1.6v1.6h-1.6zM252.6 587.0h1.6v1.6h-1.6zM256.3 587.0h1.6v1.6h-1.6zM256.3 583.3h1.6v1.6h-1.6zM262.2 587.0h1.6v1.6h-1.6zM265.9 587.0h1.6v1.6h-1.6zM271.8 587.0h1.6v1.6h-1.6zM275.5 587.0h1.6v1.6h-1.6zM281.4 587.0h1.6v1.6h-1.6zM285.1 587.0h1.6v1.6h-1.6zM291.0 587.0h1.6v1.6h-1.6zM294.7 587.0h1.6v1.6h-1.6zM300.6 587.0h1.6v1.6h-1.6zM300.6 583.3h1.6v1.6h-1.6zM300.6 579.6h1.6v1.6h-1.6zM304.3 587.0h1.6v1.6h-1.6zM310.2 587.0h1.6v1.6h-1.6zM313.9 587.0h1.6v1.6h-1.6zM319.8 587.0h1.6v1.6h-1.6zM319.8 583.3h1.6v1.6h-1.6zM323.5 587.0h1.6v1.6h-1.6zM329.4 587.0h1.6v1.6h-1.6zM333.1 587.0h1.6v1.6h-1.6zM339.0 587.0h1.6v1.6h-1.6zM342.7 587.0h1.6v1.6h-1.6zM348.6 587.0h1.6v1.6h-1.6zM352.3 587.0h1.6v1.6h-1.6zM358.2 587.0h1.6v1.6h-1.6zM361.9 587.0h1.6v1.6h-1.6zM367.8 587.0h1.6v1.6h-1.6zM371.5 587.0h1.6v1.6h-1.6zM377.4 587.0h1.6v1.6h-1.6zM381.1 587.0h1.6v1.6h-1.6zM387.0 587.0h1.6v1.6h-1.6zM390.7 587.0h1.6v1.6h-1.6zM396.6 587.0h1.6v1.6h-1.6zM400.3 587.0h1.6v1.6h-1.6zM406.2 587.0h1.6v1.6h-1.6zM409.9 587.0h1.6v1.6h-1.6z" fill="#3e3590" stroke="#3e3590"/>
<path d="M185.4 566.6h1.6v1.6h-1.6zM185.4 562.9h1.6v1.6h-1.6zM185.4 559.2h1.6v1.6h-1.6zM185.4 555.5h1.6v1.6h-1.6z" fill="#544aa0" stroke="#544aa0"/>
<path d="M185.4 546.2h1.6v1.6h-1.6z" fill="#766eb6" stroke="#766eb6"/>
<path d="M41.5 596.3h1.6v1.6h-1.6zM45.1 596.3h1.6v1.6h-1.6zM51.1 596.3h1.6v1.6h-1.6zM51.1 600.0h1.6v1.6h-1.6zM54.7 596.3h1.6v1.6h-1.6zM60.6 596.3h1.6v1.6h-1.6zM64.3 596.3h1.6v1.6h-1.6zM70.3 596.3h1.6v1.6h-1.6zM73.9 596.3h1.6v1.6h-1.6zM79.9 596.3h1.6v1.6h-1.6zM83.5 596.3h1.6v1.6h-1.6zM89.5 596.3h1.6v1.6h-1.6zM89.5 600.0h1.6v1.6h-1.6zM89.5 603.7h1.6v1.6h-1.6zM93.1 596.3h1.6v1.6h-1.6zM93.1 600.0h1.6v1.6h-1.6zM93.1 603.7h1.6v1.6h-1.6zM93.1 607.4h1.6v1.6h-1.6zM99.1 596.3h1.6v1.6h-1.6zM99.1 600.0h1.6v1.6h-1.6zM99.1 603.7h1.6v1.6h-1.6zM102.7 596.3h1.6v1.6h-1.6zM102.7 600.0h1.6v1.6h-1.6zM102.7 603.7h1.6v1.6h-1.6zM108.7 596.3h1.6v1.6h-1.6zM108.7 600.0h1.6v1.6h-1.6zM112.3 596.3h1.6v1.6h-1.6zM112.3 600.0h1.6v1.6h-1.6zM112.3 603.7h1.6v1.6h-1.6zM118.2 596.3h1.6v1.6h-1.6zM118.2 600.0h1.6v1.6h-1.6zM118.2 603.7h1.6v1.6h-1.6zM121.9 596.3h1.6v1.6h-1.6zM121.9 600.0h1.6v1.6h-1.6zM127.9 596.3h1.6v1.6h-1.6zM127.9 600.0h1.6v1.6h-1.6zM127.9 603.7h1.6v1.6h-1.6zM127.9 607.4h1.6v1.6h-1.6zM131.5 596.3h1.6v1.6h-1.6zM131.5 600.0h1.6v1.6h-1.6zM137.4 596.3h1.6v1.6h-1.6zM141.1 596.3h1.6v1.6h-1.6zM147.0 596.3h1.6v1.6h-1.6zM147.0 600.0h1.6v1.6h-1.6zM150.7 596.3h1.6v1.6h-1.6zM150.7 600.0h1.6v1.6h-1.6zM150.7 603.7h1.6v1.6h-1.6zM150.7 607.4h1.6v1.6h-1.6zM156.6 596.3h1.6v1.6h-1.6zM156.6 600.0h1.6v1.6h-1.6zM160.3 596.3h1.6v1.6h-1.6zM160.3 600.0h1.6v1.6h-1.6zM160.3 603.7h1.6v1.6h-1.6zM160.3 607.4h1.6v1.6h-1.6zM166.2 596.3h1.6v1.6h-1.6zM166.2 600.0h1.6v1.6h-1.6zM169.9 596.3h1.6v1.6h-1.6zM169.9 600.0h1.6v1.6h-1.6zM169.9 603.7h1.6v1.6h-1.6zM175.8 596.3h1.6v1.6h-1.6zM175.8 600.0h1.6v1.6h-1.6zM175.8 603.7h1.6v1.6h-1.6zM175.8 607.4h1.6v1.6h-1.6zM179.5 596.3h1.6v1.6h-1.6zM179.5 600.0h1.6v1.6h-1.6zM179.5 603.7h1.6v1.6h-1.6zM179.5 607.4h1.6v1.6h-1.6zM185.4 596.3h1.6v1.6h-1.6zM185.4 600.0h1.6v1.6h-1.6zM185.4 603.7h1.6v1.6h-1.6zM185.4 607.4h1.6v1.6h-1.6zM189.1 596.3h1.6v1.6h-1.6zM189.1 600.0h1.6v1.6h-1.6zM189.1 603.7h1.6v1.6h-1.6zM189.1 607.4h1.6v1.6h-1.6zM195.0 596.3h1.6v1.6h-1.6zM195.0 600.0h1.6v1.6h-1.6zM195.0 603.7h1.6v1.6h-1.6zM198.7 596.3h1.6v1.6h-1.6zM198.7 600.0h1.6v1.6h-1.6zM204.6 596.3h1.6v1.6h-1.6zM204.6 600.0h1.6v1.6h-1.6zM204.6 603.7h1.6v1.6h-1.6zM208.3 596.3h1.6v1.6h-1.6zM208.3 600.0h1.6v1.6h-1.6zM208.3 603.7h1.6v1.6h-1.6zM208.3 607.4h1.6v1.6h-1.6zM214.2 596.3h1.6v1.6h-1.6zM217.9 596.3h1.6v1.6h-1.6zM217.9 600.0h1.6v1.6h-1.6zM217.9 603.7h1.6v1.6h-1.6zM217.9 607.4h1.6v1.6h-1.6zM223.8 596.3h1.6v1.6h-1.6zM223.8 600.0h1.6v1.6h-1.6zM227.5 596.3h1.6v1.6h-1.6zM233.4 596.3h1.6v1.6h-1.6zM237.1 596.3h1.6v1.6h-1.6zM243.0 596.3h1.6v1.6h-1.6zM243.0 600.0h1.6v1.6h-1.6zM246.7 596.3h1.6v1.6h-1.6zM246.7 600.0h1.6v1.6h-1.6zM246.7 603.7h1.6v1.6h-1.6zM246.7 607.4h1.6v1.6h-1.6zM252.6 596.3h1.6v1.6h-1.6zM252.6 600.0h1.6v1.6h-1.6zM252.6 603.7h1.6v1.6h-1.6zM256.3 596.3h1.6v1.6h-1.6zM256.3 600.0h1.6v1.6h-1.6zM256.3 603.7h1.6v1.6h-1.6zM256.3 607.4h1.6v1.6h-1.6zM262.2 596.3h1.6v1.6h-1.6zM265.9 596.3h1.6v1.6h-1.6zM271.8 596.3h1.6v1.6h-1.6zM271.8 600.0h1.6v1.6h-1.6zM275.5 596.3h1.6v1.6h-1.6zM281.4 596.3h1.6v1.6h-1.6zM285.1 596.3h1.6v1.6h-1.6zM291.0 596.3h1.6v1.6h-1.6zM291.0 600.0h1.6v1.6h-1.6zM294.7 596.3h1.6v1.6h-1.6zM300.6 596.3h1.6v1.6h-1.6zM300.6 600.0h1.6v1.6h-1.6zM300.6 603.7h1.6v1.6h-1.6zM300.6 607.4h1.6v1.6h-1.6zM304.3 596.3h1.6v1.6h-1.6zM310.2 596.3h1.6v1.6h-1.6zM310.2 600.0h1.6v1.6h-1.6zM310.2 603.7h1.6v1.6h-1.6zM313.9 596.3h1.6v1.6h-1.6zM313.9 600.0h1.6v1.6h-1.6zM313.9 603.7h1.6v1.6h-1.6zM313.9 607.4h1.6v1.6h-1.6zM319.8 596.3h1.6v1.6h-1.6zM319.8 600.0h1.6v1.6h-1.6zM319.8 603.7h1.6v1.6h-1.6zM319.8 607.4h1.6v1.6h-1.6zM323.5 596.3h1.6v1.6h-1.6zM323.5 600.0h1.6v1.6h-1.6zM323.5 603.7h1.6v1.6h-1.6zM323.5 607.4h1.6v1.6h-1.6zM329.4 596.3h1.6v1.6h-1.6zM329.4 600.0h1.6v1.6h-1.6zM329.4 603.7h1.6v1.6h-1.6zM329.4 607.4h1.6v1.6h-1.6zM333.1 596.3h1.6v1.6h-1.6zM333.1 600.0h1.6v1.6h-1.6zM333.1 603.7h1.6v1.6h-1.6zM333.1 607.4h1.6v1.6h-1.6zM339.0 596.3h1.6v1.6h-1.6zM339.0 600.0h1.6v1.6h-1.6zM339.0 603.7h1.6v1.6h-1.6zM339.0 607.4h1.6v1.6h-1.6zM342.7 596.3h1.6v1.6h-1.6zM342.7 600.0h1.6v1.6h-1.6zM342.7 603.7h1.6v1.6h-1.6zM342.7 607.4h1.6v1.6h-1.6zM348.6 596.3h1.6v1.6h-1.6zM348.6 600.0h1.6v1.6h-1.6zM348.6 603.7h1.6v1.6h-1.6zM348.6 607.4h1.6v1.6h-1.6zM352.3 596.3h1.6v1.6h-1.6zM352.3 600.0h1.6v1.6h-1.6zM352.3 603.7h1.6v1.6h-1.6zM352.3 607.4h1.6v1.6h-1.6zM358.2 596.3h1.6v1.6h-1.6zM358.2 600.0h1.6v1.6h-1.6zM358.2 603.7h1.6v1.6h-1.6zM358.2 607.4h1.6v1.6h-1.6zM361.9 596.3h1.6v1.6h-1.6zM361.9 600.0h1.6v1.6h-1.6zM361.9 603.7h1.6v1.6h-1.6zM361.9 607.4h1.6v1.6h-1.6zM367.8 596.3h1.6v1.6h-1.6zM367.8 600.0h1.6v1.6h-1.6zM367.8 603.7h1.6v1.6h-1.6zM367.8 607.4h1.6v1.6h-1.6zM371.5 596.3h1.6v1.6h-1.6zM371.5 600.0h1.6v1.6h-1.6zM371.5 603.7h1.6v1.6h-1.6zM371.5 607.4h1.6v1.6h-1.6zM377.4 596.3h1.6v1.6h-1.6zM377.4 600.0h1.6v1.6h-1.6zM377.4 603.7h1.6v1.6h-1.6zM377.4 607.4h1.6v1.6h-1.6zM381.1 596.3h1.6v1.6h-1.6zM381.1 600.0h1.6v1.6h-1.6zM381.1 603.7h1.6v1.6h-1.6zM381.1 607.4h1.6v1.6h-1.6zM387.0 596.3h1.6v1.6h-1.6zM387.0 600.0h1.6v1.6h-1.6zM390.7 596.3h1.6v1.6h-1.6zM396.6 596.3h1.6v1.6h-1.6zM400.3 596.3h1.6v1.6h-1.6zM406.2 596.3h1.6v1.6h-1.6zM409.9 596.3h1.6v1.6h-1.6zM409.9 600.0h1.6v1.6h-1.6z" fill="#7e267f" stroke="#7e267f"/>
<path d="M93.1 616.7h1.6v1.6h-1.6zM93.1 620.4h1.6v1.6h-1.6zM93.1 624.1h1.6v1.6h-1.6zM127.9 616.7h1.6v1.6h-1.6zM175.8 616.7h1.6v1.6h-1.6zM175.8 620.4h1.6v1.6h-1.6zM175.8 624.1h1.6v1.6h-1.6zM175.8 627.8h1.6v1.6h-1.6zM179.5 616.7h1.6v1.6h-1.6zM179.5 620.4h1.6v1.6h-1.6zM179.5 624.1h1.6v1.6h-1.6zM179.5 627.8h1.6v1.6h-1.6zM185.4 616.7h1.6v1.6h-1.6zM185.4 620.4h1.6v1.6h-1.6zM185.4 624.1h1.6v1.6h-1.6zM189.1 616.7h1.6v1.6h-1.6zM189.1 620.4h1.6v1.6h-1.6zM189.1 624.1h1.6v1.6h-1.6zM217.9 616.7h1.6v1.6h-1.6zM246.7 616.7h1.6v1.6h-1.6zM256.3 616.7h1.6v1.6h-1.6zM256.3 620.4h1.6v1.6h-1.6zM256.3 624.1h1.6v1.6h-1.6zM256.3 627.8h1.6v1.6h-1.6zM300.6 616.7h1.6v1.6h-1.6zM300.6 620.4h1.6v1.6h-1.6zM300.6 624.1h1.6v1.6h-1.6zM300.6 627.8h1.6v1.6h-1.6zM313.9 616.7h1.6v1.6h-1.6zM313.9 620.4h1.6v1.6h-1.6zM313.9 624.1h1.6v1.6h-1.6zM313.9 627.8h1.6v1.6h-1.6zM319.8 616.7h1.6v1.6h-1.6zM319.8 620.4h1.6v1.6h-1.6zM319.8 624.1h1.6v1.6h-1.6zM319.8 627.8h1.6v1.6h-1.6zM323.5 616.7h1.6v1.6h-1.6zM323.5 620.4h1.6v1.6h-1.6zM323.5 624.1h1.6v1.6h-1.6zM323.5 627.8h1.6v1.6h-1.6zM329.4 616.7h1.6v1.6h-1.6zM329.4 620.4h1.6v1.6h-1.6zM329.4 624.1h1.6v1.6h-1.6zM329.4 627.8h1.6v1.6h-1.6zM333.1 616.7h1.6v1.6h-1.6zM333.1 620.4h1.6v1.6h-1.6zM333.1 624.1h1.6v1.6h-1.6zM333.1 627.8h1.6v1.6h-1.6zM339.0 616.7h1.6v1.6h-1.6zM339.0 620.4h1.6v1.6h-1.6zM339.0 624.1h1.6v1.6h-1.6zM339.0 627.8h1.6v1.6h-1.6zM342.7 616.7h1.6v1.6h-1.6zM342.7 620.4h1.6v1.6h-1.6zM348.6 616.7h1.6v1.6h-1.6zM348.6 620.4h1.6v1.6h-1.6zM352.3 616.7h1.6v1.6h-1.6zM352.3 620.4h1.6v1.6h-1.6zM352.3 624.1h1.6v1.6h-1.6zM352.3 627.8h1.6v1.6h-1.6zM358.2 616.7h1.6v1.6h-1.6zM358.2 620.4h1.6v1.6h-1.6zM358.2 624.1h1.6v1.6h-1.6zM358.2 627.8h1.6v1.6h-1.6zM361.9 616.7h1.6v1.6h-1.6zM361.9 620.4h1.6v1.6h-1.6zM361.9 624.1h1.6v1.6h-1.6zM361.9 627.8h1.6v1.6h-1.6zM367.8 616.7h1.6v1.6h-1.6zM367.8 620.4h1.6v1.6h-1.6zM367.8 624.1h1.6v1.6h-1.6zM367.8 627.8h1.6v1.6h-1.6zM371.5 616.7h1.6v1.6h-1.6zM371.5 620.4h1.6v1.6h-1.6zM371.5 624.1h1.6v1.6h-1.6zM377.4 616.7h1.6v1.6h-1.6zM377.4 620.4h1.6v1.6h-1.6zM381.1 616.7h1.6v1.6h-1.6zM381.1 620.4h1.6v1.6h-1.6z" fill="#98509a" stroke="#98509a"/>
<path d="M300.6 637.1h1.6v1.6h-1.6zM300.6 640.8h1.6v1.6h-1.6zM300.6 644.5h1.6v1.6h-1.6zM300.6 648.2h1.6v1.6h-1.6zM313.9 637.1h1.6v1.6h-1.6zM313.9 640.8h1.6v1.6h-1.6zM313.9 644.5h1.6v1.6h-1.6zM313.9 648.2h1.6v1.6h-1.6zM319.8 637.1h1.6v1.6h-1.6zM319.8 640.8h1.6v1.6h-1.6zM319.8 644.5h1.6v1.6h-1.6zM319.8 648.2h1.6v1.6h-1.6zM323.5 637.1h1.6v1.6h-1.6zM323.5 640.8h1.6v1.6h-1.6zM329.4 637.1h1.6v1.6h-1.6zM329.4 640.8h1.6v1.6h-1.6zM329.4 644.5h1.6v1.6h-1.6zM329.4 648.2h1.6v1.6h-1.6zM333.1 637.1h1.6v1.6h-1.6zM333.1 640.8h1.6v1.6h-1.6zM333.1 644.5h1.6v1.6h-1.6zM333.1 648.2h1.6v1.6h-1.6zM339.0 637.1h1.6v1.6h-1.6zM339.0 640.8h1.6v1.6h-1.6zM339.0 644.5h1.6v1.6h-1.6zM339.0 648.2h1.6v1.6h-1.6zM352.3 637.1h1.6v1.6h-1.6zM352.3 640.8h1.6v1.6h-1.6zM352.3 644.5h1.6v1.6h-1.6zM352.3 648.2h1.6v1.6h-1.6zM358.2 637.1h1.6v1.6h-1.6zM358.2 640.8h1.6v1.6h-1.6zM358.2 644.5h1.6v1.6h-1.6zM358.2 648.2h1.6v1.6h-1.6zM361.9 637.1h1.6v1.6h-1.6zM361.9 640.8h1.6v1.6h-1.6zM361.9 644.5h1.6v1.6h-1.6zM361.9 648.2h1.6v1.6h-1.6zM367.8 637.1h1.6v1.6h-1.6zM367.8 640.8h1.6v1.6h-1.6zM367.8 644.5h1.6v1.6h-1.6zM367.8 648.2h1.6v1.6h-1.6z" fill="#b883b8" stroke="#b883b8"/>
<path d="M300.6 657.5h1.6v1.6h-1.6zM300.6 661.2h1.6v1.6h-1.6zM313.9 657.5h1.6v1.6h-1.6zM313.9 661.2h1.6v1.6h-1.6zM313.9 664.9h1.6v1.6h-1.6zM313.9 668.6h1.6v1.6h-1.6zM319.8 657.5h1.6v1.6h-1.6zM319.8 661.2h1.6v1.6h-1.6zM319.8 664.9h1.6v1.6h-1.6zM319.8 668.6h1.6v1.6h-1.6zM329.4 657.5h1.6v1.6h-1.6zM329.4 661.2h1.6v1.6h-1.6zM329.4 664.9h1.6v1.6h-1.6zM329.4 668.6h1.6v1.6h-1.6zM333.1 657.5h1.6v1.6h-1.6zM333.1 661.2h1.6v1.6h-1.6zM333.1 664.9h1.6v1.6h-1.6zM333.1 668.6h1.6v1.6h-1.6zM339.0 657.5h1.6v1.6h-1.6zM339.0 661.2h1.6v1.6h-1.6zM339.0 664.9h1.6v1.6h-1.6zM339.0 668.6h1.6v1.6h-1.6zM352.3 657.5h1.6v1.6h-1.6zM352.3 661.2h1.6v1.6h-1.6zM352.3 664.9h1.6v1.6h-1.6zM358.2 657.5h1.6v1.6h-1.6zM358.2 661.2h1.6v1.6h-1.6zM358.2 664.9h1.6v1.6h-1.6zM358.2 668.6h1.6v1.6h-1.6zM361.9 657.5h1.6v1.6h-1.6zM361.9 661.2h1.6v1.6h-1.6zM361.9 664.9h1.6v1.6h-1.6zM361.9 668.6h1.6v1.6h-1.6zM367.8 657.5h1.6v1.6h-1.6zM367.8 661.2h1.6v1.6h-1.6zM367.8 664.9h1.6v1.6h-1.6zM367.8 668.6h1.6v1.6h-1.6z" fill="#d2aad2" stroke="#d2aad2"/>
<path d="M1395.1 281.0h1.6v1.6h-1.6zM1398.7 281.0h1.6v1.6h-1.6zM1404.7 281.0h1.6v1.6h-1.6zM1408.3 281.0h1.6v1.6h-1.6zM1414.3 281.0h1.6v1.6h-1.6zM1417.9 281.0h1.6v1.6h-1.6zM1423.9 281.0h1.6v1.6h-1.6zM1427.5 281.0h1.6v1.6h-1.6zM1433.5 281.0h1.6v1.6h-1.6zM1437.1 281.0h1.6v1.6h-1.6zM1395.1 301.4h1.6v1.6h-1.6zM1398.7 301.4h1.6v1.6h-1.6zM1404.7 301.4h1.6v1.6h-1.6zM1408.3 301.4h1.6v1.6h-1.6zM1414.3 301.4h1.6v1.6h-1.6zM1417.9 301.4h1.6v1.6h-1.6zM1423.9 301.4h1.6v1.6h-1.6zM1427.5 301.4h1.6v1.6h-1.6zM1433.5 301.4h1.6v1.6h-1.6zM1437.1 301.4h1.6v1.6h-1.6zM1395.1 321.8h1.6v1.6h-1.6zM1398.7 321.8h1.6v1.6h-1.6zM1404.7 321.8h1.6v1.6h-1.6zM1408.3 321.8h1.6v1.6h-1.6zM1414.3 321.8h1.6v1.6h-1.6zM1417.9 321.8h1.6v1.6h-1.6zM1423.9 321.8h1.6v1.6h-1.6zM1427.5 321.8h1.6v1.6h-1.6zM1433.5 321.8h1.6v1.6h-1.6zM1437.1 321.8h1.6v1.6h-1.6zM1398.7 342.2h1.6v1.6h-1.6zM1408.3 342.2h1.6v1.6h-1.6zM1414.3 342.2h1.6v1.6h-1.6zM1423.9 342.2h1.6v1.6h-1.6zM1427.5 342.2h1.6v1.6h-1.6zM1437.1 342.2h1.6v1.6h-1.6zM1395.1 383.0h1.6v1.6h-1.6zM1398.7 383.0h1.6v1.6h-1.6zM1404.7 383.0h1.6v1.6h-1.6zM1408.3 383.0h1.6v1.6h-1.6zM1414.3 383.0h1.6v1.6h-1.6zM1417.9 383.0h1.6v1.6h-1.6zM1423.9 383.0h1.6v1.6h-1.6zM1427.5 383.0h1.6v1.6h-1.6zM1433.5 383.0h1.6v1.6h-1.6zM1437.1 383.0h1.6v1.6h-1.6z" fill="#8c8c8c" stroke="#8c8c8c"/>
<path d="M1395.1 362.6h1.6v1.6h-1.6zM1398.7 362.6h1.6v1.6h-1.6zM1404.7 362.6h1.6v1.6h-1.6zM1408.3 362.6h1.6v1.6h-1.6zM1414.3 362.6h1.6v1.6h-1.6zM1417.9 362.6h1.6v1.6h-1.6zM1423.9 362.6h1.6v1.6h-1.6zM1427.5 362.6h1.6v1.6h-1.6zM1433.5 362.6h1.6v1.6h-1.6zM1437.1 362.6h1.6v1.6h-1.6zM1395.1 403.4h1.6v1.6h-1.6zM1398.7 403.4h1.6v1.6h-1.6zM1404.7 403.4h1.6v1.6h-1.6zM1408.3 403.4h1.6v1.6h-1.6zM1414.3 403.4h1.6v1.6h-1.6zM1417.9 403.4h1.6v1.6h-1.6zM1423.9 403.4h1.6v1.6h-1.6zM1427.5 403.4h1.6v1.6h-1.6zM1433.5 403.4h1.6v1.6h-1.6zM1437.1 403.4h1.6v1.6h-1.6z" fill="#585858" stroke="#585858"/>
<path d="M1395.1 423.8h1.6v1.6h-1.6zM1404.7 423.8h1.6v1.6h-1.6zM1408.3 423.8h1.6v1.6h-1.6zM1414.3 423.8h1.6v1.6h-1.6zM1417.9 423.8h1.6v1.6h-1.6zM1427.5 423.8h1.6v1.6h-1.6zM1437.1 423.8h1.6v1.6h-1.6z" fill="#8a8a8a" stroke="#8a8a8a"/>
<path d="M1395.1 444.2h1.6v1.6h-1.6zM1414.3 444.2h1.6v1.6h-1.6z" fill="#898989" stroke="#898989"/>
<path d="M1404.7 444.2h1.6v1.6h-1.6zM1408.3 444.2h1.6v1.6h-1.6zM1417.9 444.2h1.6v1.6h-1.6zM1423.9 444.2h1.6v1.6h-1.6zM1427.5 444.2h1.6v1.6h-1.6zM1433.5 444.2h1.6v1.6h-1.6zM1437.1 444.2h1.6v1.6h-1.6z" fill="#575757" stroke="#575757"/>
<path d="M1395.1 464.6h1.6v1.6h-1.6zM1398.7 464.6h1.6v1.6h-1.6zM1404.7 464.6h1.6v1.6h-1.6zM1408.3 464.6h1.6v1.6h-1.6zM1414.3 464.6h1.6v1.6h-1.6zM1417.9 464.6h1.6v1.6h-1.6zM1423.9 464.6h1.6v1.6h-1.6zM1427.5 464.6h1.6v1.6h-1.6zM1433.5 464.6h1.6v1.6h-1.6zM1437.1 464.6h1.6v1.6h-1.6z" fill="#565656" stroke="#565656"/>
<path d="M1395.1 485.0h1.6v1.6h-1.6zM1398.7 485.0h1.6v1.6h-1.6zM1404.7 485.0h1.6v1.6h-1.6zM1408.3 485.0h1.6v1.6h-1.6zM1414.3 485.0h1.6v1.6h-1.6zM1417.9 485.0h1.6v1.6h-1.6zM1423.9 485.0h1.6v1.6h-1.6zM1427.5 485.0h1.6v1.6h-1.6zM1433.5 485.0h1.6v1.6h-1.6zM1437.1 485.0h1.6v1.6h-1.6z" fill="#555555" stroke="#555555"/>
<path d="M1395.1 505.4h1.6v1.6h-1.6zM1398.7 505.4h1.6v1.6h-1.6zM1404.7 505.4h1.6v1.6h-1.6zM1408.3 505.4h1.6v1.6h-1.6zM1414.3 505.4h1.6v1.6h-1.6zM1417.9 505.4h1.6v1.6h-1.6zM1423.9 505.4h1.6v1.6h-1.6zM1427.5 505.4h1.6v1.6h-1.6zM1433.5 505.4h1.6v1.6h-1.6zM1437.1 505.4h1.6v1.6h-1.6z" fill="#545454" stroke="#545454"/>
<path d="M1395.1 525.8h1.6v1.6h-1.6zM1398.7 525.8h1.6v1.6h-1.6zM1404.7 525.8h1.6v1.6h-1.6zM1408.3 525.8h1.6v1.6h-1.6zM1414.3 525.8h1.6v1.6h-1.6zM1417.9 525.8h1.6v1.6h-1.6zM1423.9 525.8h1.6v1.6h-1.6zM1427.5 525.8h1.6v1.6h-1.6zM1433.5 525.8h1.6v1.6h-1.6zM1437.1 525.8h1.6v1.6h-1.6z" fill="#535353" stroke="#535353"/>
<path d="M1395.1 546.2h1.6v1.6h-1.6zM1398.7 546.2h1.6v1.6h-1.6zM1404.7 546.2h1.6v1.6h-1.6zM1408.3 546.2h1.6v1.6h-1.6zM1414.3 546.2h1.6v1.6h-1.6zM1417.9 546.2h1.6v1.6h-1.6zM1433.5 546.2h1.6v1.6h-1.6zM1437.1 546.2h1.6v1.6h-1.6z" fill="#515151" stroke="#515151"/>
<path d="M1427.5 546.2h1.6v1.6h-1.6z" fill="#7b7b7b" stroke="#7b7b7b"/>
<path d="M1395.1 566.6h1.6v1.6h-1.6zM1398.7 566.6h1.6v1.6h-1.6zM1404.7 566.6h1.6v1.6h-1.6zM1408.3 566.6h1.6v1.6h-1.6zM1423.9 566.6h1.6v1.6h-1.6zM1427.5 566.6h1.6v1.6h-1.6zM1433.5 566.6h1.6v1.6h-1.6zM1437.1 566.6h1.6v1.6h-1.6z" fill="#4e4e4e" stroke="#4e4e4e"/>
<path d="M1417.9 566.6h1.6v1.6h-1.6z" fill="#757575" stroke="#757575"/>
<path d="M1395.1 587.0h1.6v1.6h-1.6zM1398.7 587.0h1.6v1.6h-1.6zM1404.7 587.0h1.6v1.6h-1.6zM1408.3 587.0h1.6v1.6h-1.6zM1414.3 587.0h1.6v1.6h-1.6zM1417.9 587.0h1.6v1.6h-1.6zM1423.9 587.0h1.6v1.6h-1.6zM1427.5 587.0h1.6v1.6h-1.6zM1433.5 587.0h1.6v1.6h-1.6zM1437.1 587.0h1.6v1.6h-1.6z" fill="#4b4b4b" stroke="#4b4b4b"/>
<path d="M1395.1 607.4h1.6v1.6h-1.6zM1398.7 607.4h1.6v1.6h-1.6zM1404.7 607.4h1.6v1.6h-1.6zM1408.3 607.4h1.6v1.6h-1.6zM1414.3 607.4h1.6v1.6h-1.6zM1417.9 607.4h1.6v1.6h-1.6zM1423.9 607.4h1.6v1.6h-1.6zM1427.5 607.4h1.6v1.6h-1.6zM1433.5 607.4h1.6v1.6h-1.6zM1437.1 607.4h1.6v1.6h-1.6z" fill="#484848" stroke="#484848"/>
<path d="M1395.1 627.8h1.6v1.6h-1.6zM1398.7 627.8h1.6v1.6h-1.6zM1404.7 627.8h1.6v1.6h-1.6zM1408.3 627.8h1.6v1.6h-1.6zM1414.3 627.8h1.6v1.6h-1.6zM1417.9 627.8h1.6v1.6h-1.6zM1423.9 627.8h1.6v1.6h-1.6zM1427.5 627.8h1.6v1.6h-1.6zM1433.5 627.8h1.6v1.6h-1.6zM1437.1 627.8h1.6v1.6h-1.6z" fill="#444444" stroke="#444444"/>
<path d="M1395.1 648.2h1.6v1.6h-1.6zM1398.7 648.2h1.6v1.6h-1.6zM1404.7 648.2h1.6v1.6h-1.6zM1408.3 648.2h1.6v1.6h-1.6zM1414.3 648.2h1.6v1.6h-1.6zM1417.9 648.2h1.6v1.6h-1.6zM1423.9 648.2h1.6v1.6h-1.6zM1427.5 648.2h1.6v1.6h-1.6zM1433.5 648.2h1.6v1.6h-1.6zM1437.1 648.2h1.6v1.6h-1.6z" fill="#414141" stroke="#414141"/>
<path d="M1395.1 668.6h1.6v1.6h-1.6zM1398.7 668.6h1.6v1.6h-1.6zM1408.3 668.6h1.6v1.6h-1.6zM1414.3 668.6h1.6v1.6h-1.6zM1417.9 668.6h1.6v1.6h-1.6zM1423.9 668.6h1.6v1.6h-1.6zM1427.5 668.6h1.6v1.6h-1.6zM1433.5 668.6h1.6v1.6h-1.6zM1437.1 668.6h1.6v1.6h-1.6z" fill="#3d3d3d" stroke="#3d3d3d"/>
</g>
<rect x="1241.0" y="69.6" width="7.6" height="7.6" fill="#404040"/>
<rect x="1250.6" y="69.6" width="7.6" height="7.6" fill="#404040"/>
<rect x="1260.2" y="69.6" width="7.6" height="7.6" fill="#404040"/>
<rect x="1269.8" y="69.6" width="7.6" height="7.6" fill="#404040"/>
<rect x="1279.4" y="69.6" width="7.6" height="7.6" fill="#404040"/>
<rect x="1289.0" y="69.6" width="7.6" height="7.6" fill="#404040"/>
<rect x="1298.6" y="69.6" width="7.6" height="7.6" fill="#404040"/>
<rect x="1308.2" y="69.6" width="7.6" height="7.6" fill="#404040"/>
<rect x="1317.8" y="69.6" width="7.6" height="7.6" fill="#404040"/>
<rect x="1327.4" y="69.6" width="7.6" height="7.6" fill="#404040"/>
<rect x="444.2" y="294.0" width="7.6" height="7.6" fill="#933d3d"/>
<rect x="453.8" y="294.0" width="7.6" height="7.6" fill="#404040"/>
<rect x="463.4" y="294.0" width="7.6" height="7.6" fill="#404040"/>
<rect x="473.0" y="294.0" width="7.6" height="7.6" fill="#404040"/>
<rect x="482.6" y="294.0" width="7.6" height="7.6" fill="#404040"/>
<rect x="492.2" y="294.0" width="7.6" height="7.6" fill="#404040"/>
<rect x="501.8" y="294.0" width="7.6" height="7.6" fill="#404040"/>
<rect x="511.4" y="294.0" width="7.6" height="7.6" fill="#404040"/>
<rect x="521.0" y="294.0" width="7.6" height="7.6" fill="#404040"/>
<rect x="530.6" y="294.0" width="7.6" height="7.6" fill="#404040"/>
<rect x="540.2" y="294.0" width="7.6" height="7.6" fill="#404040"/>
<rect x="549.8" y="294.0" width="7.6" height="7.6" fill="#404040"/>
<rect x="559.4" y="294.0" width="7.6" height="7.6" fill="#404040"/>
<rect x="569.0" y="294.0" width="7.6" height="7.6" fill="#404040"/>
<rect x="444.2" y="334.8" width="7.6" height="7.6" fill="#404040"/>
<rect x="453.8" y="334.8" width="7.6" height="7.6" fill="#404040"/>
<rect x="463.4" y="334.8" width="7.6" height="7.6" fill="#404040"/>
<rect x="473.0" y="334.8" width="7.6" height="7.6" fill="#404040"/>
<rect x="482.6" y="334.8" width="7.6" height="7.6" fill="#404040"/>
<rect x="492.2" y="334.8" width="7.6" height="7.6" fill="#404040"/>
<rect x="501.8" y="334.8" width="7.6" height="7.6" fill="#404040"/>
<rect x="511.4" y="334.8" width="7.6" height="7.6" fill="#404040"/>
<rect x="521.0" y="334.8" width="7.6" height="7.6" fill="#404040"/>
<rect x="530.6" y="334.8" width="7.6" height="7.6" fill="#404040"/>
<rect x="540.2" y="334.8" width="7.6" height="7.6" fill="#404040"/>
<rect x="549.8" y="334.8" width="7.6" height="7.6" fill="#404040"/>
<rect x="559.4" y="334.8" width="7.6" height="7.6" fill="#404040"/>
<rect x="569.0" y="334.8" width="7.6" height="7.6" fill="#404040"/>
<rect x="444.2" y="375.6" width="7.6" height="7.6" fill="#404040"/>
<rect x="453.8" y="375.6" width="7.6" height="7.6" fill="#404040"/>
<rect x="463.4" y="375.6" width="7.6" height="7.6" fill="#404040"/>
<rect x="473.0" y="375.6" width="7.6" height="7.6" fill="#404040"/>
<rect x="482.6" y="375.6" width="7.6" height="7.6" fill="#404040"/>
<rect x="492.2" y="375.6" width="7.6" height="7.6" fill="#404040"/>
<rect x="501.8" y="375.6" width="7.6" height="7.6" fill="#404040"/>
<rect x="511.4" y="375.6" width="7.6" height="7.6" fill="#404040"/>
<rect x="521.0" y="375.6" width="7.6" height="7.6" fill="#404040"/>
<rect x="530.6" y="375.6" width="7.6" height="7.6" fill="#404040"/>
<rect x="540.2" y="375.6" width="7.6" height="7.6" fill="#404040"/>
<rect x="549.8" y="375.6" width="7.6" height="7.6" fill="#404040"/>
<rect x="559.4" y="375.6" width="7.6" height="7.6" fill="#404040"/>
<rect x="569.0" y="375.6" width="7.6" height="7.6" fill="#404040"/>
<rect x="444.2" y="436.8" width="7.6" height="7.6" fill="#933d3d"/>
<rect x="453.8" y="436.8" width="7.6" height="7.6" fill="#933d3d"/>
<rect x="463.4" y="436.8" width="7.6" height="7.6" fill="#404040"/>
<rect x="473.0" y="436.8" width="7.6" height="7.6" fill="#404040"/>
<rect x="482.6" y="436.8" width="7.6" height="7.6" fill="#404040"/>
<rect x="492.2" y="436.8" width="7.6" height="7.6" fill="#404040"/>
<rect x="501.8" y="436.8" width="7.6" height="7.6" fill="#404040"/>
<rect x="511.4" y="436.8" width="7.6" height="7.6" fill="#404040"/>
<rect x="521.0" y="436.8" width="7.6" height="7.6" fill="#404040"/>
<rect x="530.6" y="436.8" width="7.6" height="7.6" fill="#404040"/>
<rect x="540.2" y="436.8" width="7.6" height="7.6" fill="#404040"/>
<rect x="549.8" y="436.8" width="7.6" height="7.6" fill="#404040"/>
<rect x="559.4" y="436.8" width="7.6" height="7.6" fill="#404040"/>
<rect x="569.0" y="436.8" width="7.6" height="7.6" fill="#404040"/>
<rect x="1499.9" y="268.2" width="8.6" height="18.2" fill="#e0e0e0"/>
<defs><linearGradient id="cg" x1="0" y1="0" x2="1" y2="0.3"><stop offset="0" stop-color="#3a4290"/><stop offset="0.55" stop-color="#0a0c20"/><stop offset="1" stop-color="#000"/></linearGradient></defs>
<path d="M476.7 164.3 L476.7 183.9 L480.9 180.2 L484 186.5 L487.4 185.1 L484.6 178.7 L490.6 178 Z" fill="url(#cg)" stroke="#d4d4d4" stroke-width="1.25" stroke-linejoin="round"/>
</svg>
<div class="tx">
<i class="k0" style="left:150.5px;top:10.3px">¹</i>
<i class="k1" style="left:198.5px;top:10.3px">cpu</i>
<i class="k0" style="left:534.5px;top:10.3px">m</i>
<i class="k1" style="left:582.5px;top:10.3px">enu</i>
<i class="k0" style="left:822.5px;top:10.3px">p</i>
<i class="k1" style="left:870.5px;top:10.3px">reset *</i>
<i class="k1" style="left:3654.5px;top:10.3px">20:58:46</i>
<i class="k0" style="left:6966.5px;top:10.3px">-</i>
<i class="k1" style="left:7062.5px;top:10.3px">2000ms</i>
<i class="k0" style="left:7398.5px;top:10.3px">+</i>
<i class="k2" style="left:102.5px;top:928.2px">up 02:45:37</i>
<i class="k1" style="left:7110.5px;top:214.3px">1.6 GHz</i>
<i class="k1" style="left:6006.5px;top:316.3px">CPU</i>
<i class="k3" style="left:6822.5px;top:316.3px">3%</i>
<i class="k4" style="left:6870.5px;top:316.3px">%</i>
<i class="k4" style="left:7302.5px;top:316.3px">33°C</i>
<i class="k1" style="left:6006.5px;top:418.2px">C</i>
<i class="k4" style="left:6054.5px;top:418.2px">0</i>
<i class="k3" style="left:7350.5px;top:418.2px">10</i>
<i class="k4" style="left:7446.5px;top:418.2px">%</i>
<i class="k1" style="left:6006.5px;top:520.2px">C</i>
<i class="k4" style="left:6054.5px;top:520.2px">1</i>
<i class="k3" style="left:7398.5px;top:520.2px">1</i>
<i class="k4" style="left:7446.5px;top:520.2px">%</i>
<i class="k1" style="left:6006.5px;top:622.2px">C</i>
<i class="k4" style="left:6054.5px;top:622.2px">2</i>
<i class="k3" style="left:7398.5px;top:622.2px">3</i>
<i class="k4" style="left:7446.5px;top:622.2px">%</i>
<i class="k1" style="left:6006.5px;top:724.2px">C</i>
<i class="k4" style="left:6054.5px;top:724.2px">3</i>
<i class="k3" style="left:7398.5px;top:724.2px">1</i>
<i class="k4" style="left:7446.5px;top:724.2px">%</i>
<i class="k4" style="left:6006.5px;top:826.2px">Load AVG:</i>
<i class="k4" style="left:6582.5px;top:826.2px">0.33</i>
<i class="k4" style="left:6918.5px;top:826.2px">0.25</i>
<i class="k4" style="left:7254.5px;top:826.2px">0.10</i>
<i class="k0" style="left:150.5px;top:1132.2px">²</i>
<i class="k1" style="left:198.5px;top:1132.2px">mem</i>
<i class="k0" style="left:1782.5px;top:1132.2px">d</i>
<i class="k1" style="left:1830.5px;top:1132.2px">isks</i>
<i class="k0" style="left:3174.5px;top:1132.2px">i</i>
<i class="k4" style="left:3222.5px;top:1132.2px">o</i>
<i class="k1" style="left:102.5px;top:1234.2px">Total:</i>
<i class="k1" style="left:1206.5px;top:1234.2px">7.87 GiB</i>
<i class="k4" style="left:102.5px;top:1336.2px">Used:</i>
<i class="k4" style="left:1254.5px;top:1336.2px">752</i>
<i class="k4" style="left:1446.5px;top:1336.2px">MiB</i>
<i class="k4" style="left:1494.5px;top:1438.2px">9%</i>
<i class="k4" style="left:102.5px;top:1540.2px">Available:</i>
<i class="k4" style="left:1206.5px;top:1540.2px">7.13</i>
<i class="k4" style="left:1446.5px;top:1540.2px">GiB</i>
<i class="k4" style="left:1446.5px;top:1642.2px">91%</i>
<i class="k4" style="left:102.5px;top:1744.2px">Cached:</i>
<i class="k4" style="left:1206.5px;top:1744.2px">2.60</i>
<i class="k4" style="left:1446.5px;top:1744.2px">GiB</i>
<i class="k4" style="left:1446.5px;top:1846.2px">33%</i>
<i class="k4" style="left:102.5px;top:1948.2px">Free:</i>
<i class="k4" style="left:1206.5px;top:1948.2px">4.34</i>
<i class="k4" style="left:1446.5px;top:1948.2px">GiB</i>
<i class="k4" style="left:1446.5px;top:2050.2px">55%</i>
<i class="k1" style="left:1734.5px;top:1234.2px">root</i>
<i class="k1" style="left:2982.5px;top:1234.2px">196 GiB</i>
<i class="k4" style="left:1734.5px;top:1336.2px">IO%</i>
<i class="k4" style="left:1734.5px;top:1438.2px">Used:</i>
<i class="k4" style="left:2022.5px;top:1438.2px">10%</i>
<i class="k4" style="left:2934.5px;top:1438.2px">20.1 GiB</i>
<i class="k1" style="left:1734.5px;top:1540.2px">swap</i>
<i class="k1" style="left:2934.5px;top:1540.2px">1.99 GiB</i>
<i class="k4" style="left:1734.5px;top:1642.2px">Used:</i>
<i class="k4" style="left:2070.5px;top:1642.2px">0%</i>
<i class="k4" style="left:3030.5px;top:1642.2px">0 Byte</i>
<i class="k1" style="left:1734.5px;top:1744.2px">proc</i>
<i class="k1" style="left:3030.5px;top:1744.2px">0 Byte</i>
<i class="k4" style="left:1734.5px;top:1846.2px">Used:</i>
<i class="k4" style="left:2070.5px;top:1846.2px">0%</i>
<i class="k4" style="left:3030.5px;top:1846.2px">0 Byte</i>
<i class="k1" style="left:1734.5px;top:1948.2px">firmware</i>
<i class="k1" style="left:2982.5px;top:1948.2px">509 MiB</i>
<i class="k4" style="left:1734.5px;top:2050.2px">IO%</i>
<i class="k4" style="left:1734.5px;top:2152.2px">Used:</i>
<i class="k4" style="left:2022.5px;top:2152.2px">15%</i>
<i class="k4" style="left:2934.5px;top:2152.2px">77.3 MiB</i>
<i class="k0" style="left:150.5px;top:2560.2px">³</i>
<i class="k1" style="left:198.5px;top:2560.2px">net</i>
<i class="k1" style="left:438.5px;top:2560.2px">192.168.0.70</i>
<i class="k1" style="left:1974.5px;top:2560.2px">s</i>
<i class="k0" style="left:2022.5px;top:2560.2px">y</i>
<i class="k1" style="left:2070.5px;top:2560.2px">nc</i>
<i class="k0" style="left:2262.5px;top:2560.2px">a</i>
<i class="k1" style="left:2310.5px;top:2560.2px">uto</i>
<i class="k0" style="left:2550.5px;top:2560.2px">z</i>
<i class="k4" style="left:2598.5px;top:2560.2px">ero</i>
<i class="k0" style="left:2838.5px;top:2560.2px">&lt;b</i>
<i class="k1" style="left:2982.5px;top:2560.2px">eth0</i>
<i class="k0" style="left:3222.5px;top:2560.2px">n&gt;</i>
<i class="k2" style="left:54.5px;top:2662.2px">2.4M</i>
<i class="k2" style="left:54.5px;top:3274.2px">2.4M</i>
<i class="k1" style="left:2214.5px;top:2662.2px">download</i>
<i class="k1" style="left:2214.5px;top:3274.2px">upload</i>
<i class="k4" style="left:2118.5px;top:2764.2px">▼</i>
<i class="k4" style="left:2214.5px;top:2764.2px">13.5 KiB/s</i>
<i class="k4" style="left:2790.5px;top:2764.2px">(108 Kibps)</i>
<i class="k4" style="left:2118.5px;top:2866.2px">▼</i>
<i class="k4" style="left:2214.5px;top:2866.2px">Total:</i>
<i class="k4" style="left:2982.5px;top:2866.2px">178 MiB</i>
<i class="k4" style="left:2118.5px;top:3070.2px">▲</i>
<i class="k4" style="left:2214.5px;top:3070.2px">262 KiB/s</i>
<i class="k4" style="left:2742.5px;top:3070.2px">(2.04 Mibps)</i>
<i class="k4" style="left:2118.5px;top:3172.2px">▲</i>
<i class="k4" style="left:2214.5px;top:3172.2px">Total:</i>
<i class="k4" style="left:2982.5px;top:3172.2px">166 MiB</i>
<i class="k0" style="left:3558.5px;top:1132.2px">⁴</i>
<i class="k1" style="left:3606.5px;top:1132.2px">proc</i>
<i class="k0" style="left:3894.5px;top:1132.2px">f</i>
<i class="k4" style="left:3942.5px;top:1132.2px">ilter</i>
<i class="k4" style="left:5670.5px;top:1132.2px">per-</i>
<i class="k5" style="left:5862.5px;top:1132.2px">c</i>
<i class="k4" style="left:5910.5px;top:1132.2px">ore</i>
<i class="k5" style="left:6150.5px;top:1132.2px">r</i>
<i class="k4" style="left:6198.5px;top:1132.2px">everse</i>
<i class="k4" style="left:6582.5px;top:1132.2px">tre</i>
<i class="k5" style="left:6726.5px;top:1132.2px">e</i>
<i class="k0" style="left:6870.5px;top:1132.2px">&lt;</i>
<i class="k1" style="left:6966.5px;top:1132.2px">cpu lazy</i>
<i class="k0" style="left:7398.5px;top:1132.2px">&gt;</i>
<i class="k6" style="left:3510.5px;top:3376.2px">↑</i>
<i class="k1" style="left:3606.5px;top:3376.2px">select</i>
<i class="k5" style="left:3942.5px;top:3376.2px">↓</i>
<i class="k7" style="left:4086.5px;top:3376.2px">info</i>
<i class="k7" style="left:4470.5px;top:3376.2px">terminate</i>
<i class="k7" style="left:4998.5px;top:3376.2px">kill</i>
<i class="k7" style="left:5286.5px;top:3376.2px">signals</i>
<i class="k1" style="left:7254.5px;top:3376.2px">0/230</i>
<i class="k1" style="left:3654.5px;top:1234.2px">Pid:</i>
<i class="k1" style="left:3894.5px;top:1234.2px">Program:</i>
<i class="k1" style="left:4710.5px;top:1234.2px">Command:</i>
<i class="k1" style="left:5718.5px;top:1234.2px">Threads:</i>
<i class="k1" style="left:6150.5px;top:1234.2px">User:</i>
<i class="k1" style="left:6726.5px;top:1234.2px">MemB</i>
<i class="k1" style="left:7254.5px;top:1234.2px">Cpu%</i>
<i class="k4" style="left:7494.5px;top:1234.2px">↑</i>
<i class="k8" style="left:3654.5px;top:1336.2px">6382</i>
<i class="k3" style="left:3894.5px;top:1336.2px">rpi-connectd</i>
<i class="k9" style="left:4710.5px;top:1336.2px">/usr/bin/rpi-connectd -s</i>
<i class="k3" style="left:6006.5px;top:1336.2px">12</i>
<i class="k9" style="left:6150.5px;top:1336.2px">pi</i>
<i class="k3" style="left:6774.5px;top:1336.2px">21M</i>
<i class="k3" style="left:7302.5px;top:1336.2px">0.5</i>
<i class="k8" style="left:3654.5px;top:1438.2px">6384</i>
<i class="k3" style="left:3894.5px;top:1438.2px">wayvnc</i>
<i class="k9" style="left:4710.5px;top:1438.2px">/usr/bin/wayvnc --config</i>
<i class="k3" style="left:6054.5px;top:1438.2px">5</i>
<i class="k9" style="left:6150.5px;top:1438.2px">pi</i>
<i class="k3" style="left:6774.5px;top:1438.2px">54M</i>
<i class="k3" style="left:7302.5px;top:1438.2px">0.5</i>
<i class="k8" style="left:3654.5px;top:1540.2px">6745</i>
<i class="k3" style="left:3894.5px;top:1540.2px">x-terminal-emul</i>
<i class="k9" style="left:4710.5px;top:1540.2px">/usr/bin/x-terminal-emul</i>
<i class="k3" style="left:6054.5px;top:1540.2px">6</i>
<i class="k9" style="left:6150.5px;top:1540.2px">pi</i>
<i class="k3" style="left:6774.5px;top:1540.2px">45M</i>
<i class="k3" style="left:7302.5px;top:1540.2px">0.5</i>
<i class="k8" style="left:3654.5px;top:1642.2px">6767</i>
<i class="k3" style="left:3894.5px;top:1642.2px">btop</i>
<i class="k9" style="left:4710.5px;top:1642.2px">btop</i>
<i class="k3" style="left:6054.5px;top:1642.2px">2</i>
<i class="k9" style="left:6150.5px;top:1642.2px">pi</i>
<i class="k3" style="left:6726.5px;top:1642.2px">4.7M</i>
<i class="k3" style="left:7302.5px;top:1642.2px">0.1</i>
<i class="k8" style="left:3654.5px;top:1744.2px">6515</i>
<i class="k3" style="left:3894.5px;top:1744.2px">Xwayland</i>
<i class="k9" style="left:4710.5px;top:1744.2px">/usr/bin/Xwayland -auth</i>
<i class="k3" style="left:6054.5px;top:1744.2px">2</i>
<i class="k9" style="left:6150.5px;top:1744.2px">pi</i>
<i class="k3" style="left:6774.5px;top:1744.2px">87M</i>
<i class="k3" style="left:7302.5px;top:1744.2px">0.0</i>
<i class="k8" style="left:3654.5px;top:1846.2px">1050</i>
<i class="k3" style="left:3894.5px;top:1846.2px">labwc</i>
<i class="k9" style="left:4710.5px;top:1846.2px">/usr/bin/labwc -m</i>
<i class="k3" style="left:6054.5px;top:1846.2px">4</i>
<i class="k9" style="left:6150.5px;top:1846.2px">pi</i>
<i class="k3" style="left:6726.5px;top:1846.2px">108M</i>
<i class="k3" style="left:7302.5px;top:1846.2px">2.0</i>
<i class="k10" style="left:3654.5px;top:1948.2px">5425</i>
<i class="k3" style="left:3894.5px;top:1948.2px">tor</i>
<i class="k11" style="left:4710.5px;top:1948.2px">/usr/bin/tor --defaults-</i>
<i class="k12" style="left:6054.5px;top:1948.2px">5</i>
<i class="k11" style="left:6150.5px;top:1948.2px">debian-tor</i>
<i class="k12" style="left:6726.5px;top:1948.2px">125M</i>
<i class="k12" style="left:7302.5px;top:1948.2px">0.0</i>
<i class="k13" style="left:3654.5px;top:2050.2px">1212</i>
<i class="k3" style="left:3894.5px;top:2050.2px">wf-panel-pi</i>
<i class="k14" style="left:4710.5px;top:2050.2px">/usr/bin/wf-panel-pi</i>
<i class="k15" style="left:6006.5px;top:2050.2px">10</i>
<i class="k14" style="left:6150.5px;top:2050.2px">pi</i>
<i class="k15" style="left:6774.5px;top:2050.2px">63M</i>
<i class="k15" style="left:7302.5px;top:2050.2px">0.1</i>
<i class="k16" style="left:3654.5px;top:2152.2px">6428</i>
<i class="k3" style="left:3894.5px;top:2152.2px">kworker/u16:2-v3</i>
<i class="k17" style="left:4710.5px;top:2152.2px"></i>
<i class="k18" style="left:6054.5px;top:2152.2px">1</i>
<i class="k17" style="left:6150.5px;top:2152.2px">root</i>
<i class="k18" style="left:6822.5px;top:2152.2px">0B</i>
<i class="k18" style="left:7302.5px;top:2152.2px">0.0</i>
<i class="k19" style="left:3654.5px;top:2254.2px">7473</i>
<i class="k3" style="left:3894.5px;top:2254.2px">upowerd</i>
<i class="k20" style="left:4710.5px;top:2254.2px">/usr/libexec/upowerd</i>
<i class="k21" style="left:6054.5px;top:2254.2px">4</i>
<i class="k20" style="left:6150.5px;top:2254.2px">root</i>
<i class="k21" style="left:6726.5px;top:2254.2px">9.8M</i>
<i class="k21" style="left:7302.5px;top:2254.2px">0.0</i>
<i class="k22" style="left:3654.5px;top:2356.2px">7707</i>
<i class="k21" style="left:3894.5px;top:2356.2px">gnome-keyring-d</i>
<i class="k23" style="left:4710.5px;top:2356.2px">/usr/bin/gnome-keyring-d</i>
<i class="k24" style="left:6054.5px;top:2356.2px">5</i>
<i class="k23" style="left:6150.5px;top:2356.2px">pi</i>
<i class="k24" style="left:6726.5px;top:2356.2px">8.8M</i>
<i class="k24" style="left:7302.5px;top:2356.2px">0.0</i>
<i class="k25" style="left:3798.5px;top:2458.2px">1</i>
<i class="k26" style="left:3894.5px;top:2458.2px">systemd</i>
<i class="k27" style="left:4710.5px;top:2458.2px">/sbin/init splash</i>
<i class="k28" style="left:6054.5px;top:2458.2px">1</i>
<i class="k27" style="left:6150.5px;top:2458.2px">root</i>
<i class="k28" style="left:6774.5px;top:2458.2px">13M</i>
<i class="k28" style="left:7302.5px;top:2458.2px">0.0</i>
<i class="k29" style="left:3654.5px;top:2560.2px">1211</i>
<i class="k30" style="left:3894.5px;top:2560.2px">pcmanfm</i>
<i class="k31" style="left:4710.5px;top:2560.2px">pcmanfm --desktop</i>
<i class="k32" style="left:6054.5px;top:2560.2px">6</i>
<i class="k31" style="left:6150.5px;top:2560.2px">pi</i>
<i class="k32" style="left:6774.5px;top:2560.2px">39M</i>
<i class="k32" style="left:7302.5px;top:2560.2px">0.0</i>
<i class="k20" style="left:3702.5px;top:2662.2px">720</i>
<i class="k33" style="left:3894.5px;top:2662.2px">avahi-daemon</i>
<i class="k34" style="left:4710.5px;top:2662.2px">avahi-daemon: running [r</i>
<i class="k35" style="left:6054.5px;top:2662.2px">1</i>
<i class="k34" style="left:6150.5px;top:2662.2px">avahi</i>
<i class="k35" style="left:6726.5px;top:2662.2px">3.0M</i>
<i class="k35" style="left:7302.5px;top:2662.2px">0.0</i>
<i class="k36" style="left:3702.5px;top:2764.2px">795</i>
<i class="k37" style="left:3894.5px;top:2764.2px">NetworkManager</i>
<i class="k38" style="left:4710.5px;top:2764.2px">/usr/sbin/NetworkManager</i>
<i class="k39" style="left:6054.5px;top:2764.2px">4</i>
<i class="k38" style="left:6150.5px;top:2764.2px">root</i>
<i class="k39" style="left:6774.5px;top:2764.2px">19M</i>
<i class="k39" style="left:7302.5px;top:2764.2px">0.0</i>
<i class="k40" style="left:3702.5px;top:2866.2px">722</i>
<i class="k41" style="left:3894.5px;top:2866.2px">dbus-daemon</i>
<i class="k42" style="left:4710.5px;top:2866.2px">/usr/bin/dbus-daemon --s</i>
<i class="k43" style="left:6054.5px;top:2866.2px">1</i>
<i class="k42" style="left:6150.5px;top:2866.2px">messagebus</i>
<i class="k43" style="left:6726.5px;top:2866.2px">5.1M</i>
<i class="k43" style="left:7302.5px;top:2866.2px">0.0</i>
<i class="k44" style="left:3654.5px;top:2968.2px">1574</i>
<i class="k45" style="left:3894.5px;top:2968.2px">sshd-session</i>
<i class="k46" style="left:4710.5px;top:2968.2px">sshd-session: pi@pts/0</i>
<i class="k47" style="left:6054.5px;top:2968.2px">1</i>
<i class="k46" style="left:6150.5px;top:2968.2px">pi</i>
<i class="k47" style="left:6726.5px;top:2968.2px">7.3M</i>
<i class="k47" style="left:7302.5px;top:2968.2px">0.0</i>
<i class="k48" style="left:3702.5px;top:3070.2px">649</i>
<i class="k49" style="left:3894.5px;top:3070.2px">kworker/u21:2-br</i>
<i class="k50" style="left:4710.5px;top:3070.2px"></i>
<i class="k51" style="left:6054.5px;top:3070.2px">1</i>
<i class="k50" style="left:6150.5px;top:3070.2px">root</i>
<i class="k51" style="left:6822.5px;top:3070.2px">0B</i>
<i class="k51" style="left:7302.5px;top:3070.2px">0.0</i>
<i class="k52" style="left:3654.5px;top:3172.2px">6361</i>
<i class="k53" style="left:3894.5px;top:3172.2px">kworker/0:2-even</i>
<i class="k54" style="left:4710.5px;top:3172.2px"></i>
<i class="k55" style="left:6054.5px;top:3172.2px">1</i>
<i class="k54" style="left:6150.5px;top:3172.2px">root</i>
<i class="k55" style="left:6822.5px;top:3172.2px">0B</i>
<i class="k55" style="left:7302.5px;top:3172.2px">0.0</i>
<i class="k56" style="left:3654.5px;top:3274.2px">6343</i>
<i class="k57" style="left:3894.5px;top:3274.2px">kworker/0:1-mm_p</i>
<i class="k58" style="left:4710.5px;top:3274.2px"></i>
<i class="k59" style="left:6054.5px;top:3274.2px">1</i>
<i class="k58" style="left:6150.5px;top:3274.2px">root</i>
<i class="k59" style="left:6822.5px;top:3274.2px">0B</i>
<i class="k59" style="left:7302.5px;top:3274.2px">0.0</i>
<i class="k4" style="left:7494.5px;top:3274.2px">↓</i>
</div>
</div>
<div id="sb"><div class="th"></div><svg width="16" height="699" viewBox="0 0 16 699"><path d="M2.4 11 L8.1 4.4 L13.9 11Z M2.4 687.8 L8.1 693.8 L13.9 687.8Z" fill="#8a9090"/></svg></div>
</div>
<div id="bot">
<div class="key" style="left:19px"><b>Ctrl</b></div>
<div class="key" style="left:77px"><svg width="20" height="25" viewBox="0 0 20 26"><path d="M10 6.6 C7.8 6.6 4.4 5.6 2.6 3.6 C1.8 2.8 1.5 1.8 1.6 1.2 C3.6 0.6 6.2 0.8 7.8 1.8 C9.2 2.8 9.9 4.4 10 6.6Z M10 6.6 C12.2 6.6 15.6 5.6 17.4 3.6 C18.2 2.8 18.5 1.8 18.4 1.2 C16.4 0.6 13.8 0.8 12.2 1.8 C10.8 2.8 10.1 4.4 10 6.6Z" fill="none" stroke="#5ba2e8" stroke-width="1.2" stroke-linejoin="round"/>
<path d="M3.6 2.2 L7.4 4.6 M16.4 2.2 L12.6 4.6" stroke="#5ba2e8" stroke-width="0.9"/>
<path d="M10 6.2 C12.6 6 15.4 7 16.6 8.8 C17.8 9.8 18.4 11.4 18.2 13.2 C19 15 18.6 17.2 17.2 18.6 C16.8 20.6 15.4 22 13.6 22.6 C12.6 23.8 11.2 24.4 10 24.4 C8.8 24.4 7.4 23.8 6.4 22.6 C4.6 22 3.2 20.6 2.8 18.6 C1.4 17.2 1 15 1.8 13.2 C1.6 11.4 2.2 9.8 3.4 8.8 C4.6 7 7.4 6 10 6.2Z" fill="#5ba2e8"/>
<g fill="#1a1b1d"><ellipse cx="10" cy="9" rx="1.9" ry="0.9"/><ellipse cx="5.7" cy="9.7" rx="1.6" ry="0.9" transform="rotate(-35 5.7 9.7)"/><ellipse cx="14.3" cy="9.7" rx="1.6" ry="0.9" transform="rotate(35 14.3 9.7)"/><circle cx="7" cy="13.3" r="2.1"/><circle cx="13" cy="13.3" r="2.1"/><ellipse cx="2.9" cy="14" rx="0.8" ry="1.6"/><ellipse cx="17.1" cy="14" rx="0.8" ry="1.6"/><rect x="8.2" y="16" width="3.6" height="3.4" rx="1.2"/><ellipse cx="5" cy="18.8" rx="1.5" ry="1.4"/><ellipse cx="15" cy="18.8" rx="1.5" ry="1.4"/><ellipse cx="10" cy="21.9" rx="1.9" ry="0.8"/></g></svg></div>
<div class="key" style="left:134px"><b>Alt</b></div>
<div class="key" style="left:192px"><b>Esc</b></div>
<div class="key" style="left:250px"><b>Tab</b></div>
</div>
</body></html>
